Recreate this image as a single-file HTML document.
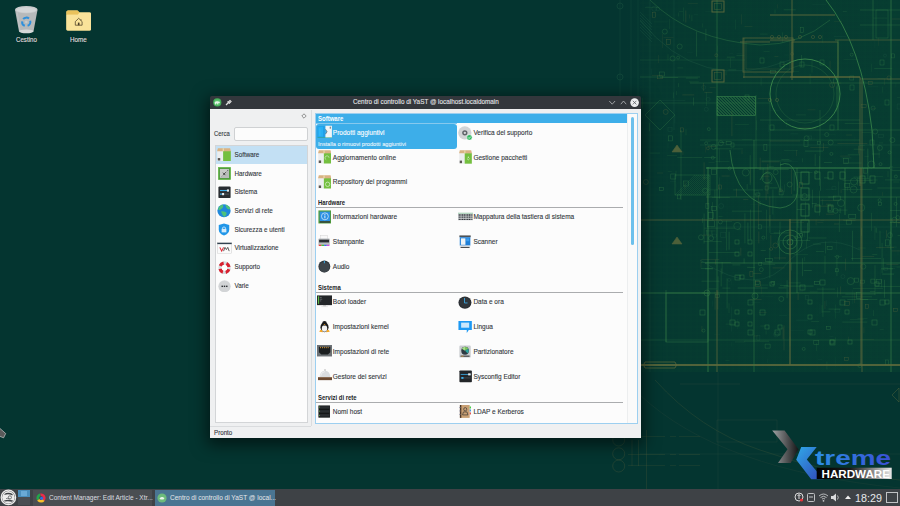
<!DOCTYPE html>
<html><head><meta charset="utf-8">
<style>
*{margin:0;padding:0;box-sizing:border-box}
html,body{width:900px;height:506px;overflow:hidden}
body{background:#043530;font-family:"Liberation Sans",sans-serif;position:relative}
.abs{position:absolute}
.t{position:absolute;white-space:nowrap;line-height:1;transform-origin:0 0;-webkit-text-stroke:0.1px currentColor}
</style></head><body>
<svg class="abs" style="left:0;top:0" width="900" height="506"><defs><linearGradient id="bpg" x1="0" x2="1" y1="0" y2="0"><stop offset="0" stop-color="#053730" stop-opacity="0"/><stop offset="0.1" stop-color="#053830" stop-opacity="1"/><stop offset="0.3" stop-color="#063a30"/><stop offset="1" stop-color="#073c31"/></linearGradient></defs><rect x="625" y="0" width="275" height="372" fill="url(#bpg)"/><line x1="643" y1="0" x2="643" y2="372" stroke="#1f5a44" stroke-width="0.35" opacity="0.3"/><line x1="649" y1="0" x2="649" y2="372" stroke="#1f5a44" stroke-width="0.35" opacity="0.3"/><line x1="655" y1="0" x2="655" y2="372" stroke="#1f5a44" stroke-width="0.35" opacity="0.3"/><line x1="661" y1="0" x2="661" y2="372" stroke="#1f5a44" stroke-width="0.35" opacity="0.3"/><line x1="667" y1="0" x2="667" y2="372" stroke="#1f5a44" stroke-width="0.35" opacity="0.3"/><line x1="673" y1="0" x2="673" y2="372" stroke="#1f5a44" stroke-width="0.35" opacity="0.3"/><line x1="679" y1="0" x2="679" y2="372" stroke="#1f5a44" stroke-width="0.35" opacity="0.3"/><line x1="685" y1="0" x2="685" y2="372" stroke="#1f5a44" stroke-width="0.35" opacity="0.3"/><line x1="691" y1="0" x2="691" y2="372" stroke="#1f5a44" stroke-width="0.35" opacity="0.3"/><line x1="697" y1="0" x2="697" y2="372" stroke="#1f5a44" stroke-width="0.35" opacity="0.3"/><line x1="703" y1="0" x2="703" y2="372" stroke="#1f5a44" stroke-width="0.35" opacity="0.3"/><line x1="709" y1="0" x2="709" y2="372" stroke="#1f5a44" stroke-width="0.35" opacity="0.3"/><line x1="715" y1="0" x2="715" y2="372" stroke="#1f5a44" stroke-width="0.35" opacity="0.3"/><line x1="721" y1="0" x2="721" y2="372" stroke="#1f5a44" stroke-width="0.35" opacity="0.3"/><line x1="727" y1="0" x2="727" y2="372" stroke="#1f5a44" stroke-width="0.35" opacity="0.3"/><line x1="733" y1="0" x2="733" y2="372" stroke="#1f5a44" stroke-width="0.35" opacity="0.3"/><line x1="739" y1="0" x2="739" y2="372" stroke="#1f5a44" stroke-width="0.35" opacity="0.3"/><line x1="745" y1="0" x2="745" y2="372" stroke="#1f5a44" stroke-width="0.35" opacity="0.3"/><line x1="751" y1="0" x2="751" y2="372" stroke="#1f5a44" stroke-width="0.35" opacity="0.3"/><line x1="757" y1="0" x2="757" y2="372" stroke="#1f5a44" stroke-width="0.35" opacity="0.3"/><line x1="763" y1="0" x2="763" y2="372" stroke="#1f5a44" stroke-width="0.35" opacity="0.3"/><line x1="769" y1="0" x2="769" y2="372" stroke="#1f5a44" stroke-width="0.35" opacity="0.3"/><line x1="775" y1="0" x2="775" y2="372" stroke="#1f5a44" stroke-width="0.35" opacity="0.3"/><line x1="781" y1="0" x2="781" y2="372" stroke="#1f5a44" stroke-width="0.35" opacity="0.3"/><line x1="787" y1="0" x2="787" y2="372" stroke="#1f5a44" stroke-width="0.35" opacity="0.3"/><line x1="793" y1="0" x2="793" y2="372" stroke="#1f5a44" stroke-width="0.35" opacity="0.3"/><line x1="799" y1="0" x2="799" y2="372" stroke="#1f5a44" stroke-width="0.35" opacity="0.3"/><line x1="805" y1="0" x2="805" y2="372" stroke="#1f5a44" stroke-width="0.35" opacity="0.3"/><line x1="811" y1="0" x2="811" y2="372" stroke="#1f5a44" stroke-width="0.35" opacity="0.3"/><line x1="817" y1="0" x2="817" y2="372" stroke="#1f5a44" stroke-width="0.35" opacity="0.3"/><line x1="823" y1="0" x2="823" y2="372" stroke="#1f5a44" stroke-width="0.35" opacity="0.3"/><line x1="829" y1="0" x2="829" y2="372" stroke="#1f5a44" stroke-width="0.35" opacity="0.3"/><line x1="835" y1="0" x2="835" y2="372" stroke="#1f5a44" stroke-width="0.35" opacity="0.3"/><line x1="841" y1="0" x2="841" y2="372" stroke="#1f5a44" stroke-width="0.35" opacity="0.3"/><line x1="847" y1="0" x2="847" y2="372" stroke="#1f5a44" stroke-width="0.35" opacity="0.3"/><line x1="853" y1="0" x2="853" y2="372" stroke="#1f5a44" stroke-width="0.35" opacity="0.3"/><line x1="859" y1="0" x2="859" y2="372" stroke="#1f5a44" stroke-width="0.35" opacity="0.3"/><line x1="865" y1="0" x2="865" y2="372" stroke="#1f5a44" stroke-width="0.35" opacity="0.3"/><line x1="871" y1="0" x2="871" y2="372" stroke="#1f5a44" stroke-width="0.35" opacity="0.3"/><line x1="877" y1="0" x2="877" y2="372" stroke="#1f5a44" stroke-width="0.35" opacity="0.3"/><line x1="883" y1="0" x2="883" y2="372" stroke="#1f5a44" stroke-width="0.35" opacity="0.3"/><line x1="889" y1="0" x2="889" y2="372" stroke="#1f5a44" stroke-width="0.35" opacity="0.3"/><line x1="895" y1="0" x2="895" y2="372" stroke="#1f5a44" stroke-width="0.35" opacity="0.3"/><line x1="640" y1="3" x2="900" y2="3" stroke="#1f5a44" stroke-width="0.35" opacity="0.25"/><line x1="640" y1="9" x2="900" y2="9" stroke="#1f5a44" stroke-width="0.35" opacity="0.25"/><line x1="640" y1="15" x2="900" y2="15" stroke="#1f5a44" stroke-width="0.35" opacity="0.25"/><line x1="640" y1="21" x2="900" y2="21" stroke="#1f5a44" stroke-width="0.35" opacity="0.25"/><line x1="640" y1="27" x2="900" y2="27" stroke="#1f5a44" stroke-width="0.35" opacity="0.25"/><line x1="640" y1="33" x2="900" y2="33" stroke="#1f5a44" stroke-width="0.35" opacity="0.25"/><line x1="640" y1="39" x2="900" y2="39" stroke="#1f5a44" stroke-width="0.35" opacity="0.25"/><line x1="640" y1="45" x2="900" y2="45" stroke="#1f5a44" stroke-width="0.35" opacity="0.25"/><line x1="640" y1="51" x2="900" y2="51" stroke="#1f5a44" stroke-width="0.35" opacity="0.25"/><line x1="640" y1="57" x2="900" y2="57" stroke="#1f5a44" stroke-width="0.35" opacity="0.25"/><line x1="640" y1="63" x2="900" y2="63" stroke="#1f5a44" stroke-width="0.35" opacity="0.25"/><line x1="640" y1="69" x2="900" y2="69" stroke="#1f5a44" stroke-width="0.35" opacity="0.25"/><line x1="640" y1="75" x2="900" y2="75" stroke="#1f5a44" stroke-width="0.35" opacity="0.25"/><line x1="640" y1="81" x2="900" y2="81" stroke="#1f5a44" stroke-width="0.35" opacity="0.25"/><line x1="640" y1="87" x2="900" y2="87" stroke="#1f5a44" stroke-width="0.35" opacity="0.25"/><line x1="640" y1="93" x2="900" y2="93" stroke="#1f5a44" stroke-width="0.35" opacity="0.25"/><line x1="640" y1="99" x2="900" y2="99" stroke="#1f5a44" stroke-width="0.35" opacity="0.25"/><line x1="640" y1="105" x2="900" y2="105" stroke="#1f5a44" stroke-width="0.35" opacity="0.25"/><line x1="640" y1="111" x2="900" y2="111" stroke="#1f5a44" stroke-width="0.35" opacity="0.25"/><line x1="640" y1="117" x2="900" y2="117" stroke="#1f5a44" stroke-width="0.35" opacity="0.25"/><line x1="640" y1="123" x2="900" y2="123" stroke="#1f5a44" stroke-width="0.35" opacity="0.25"/><line x1="640" y1="129" x2="900" y2="129" stroke="#1f5a44" stroke-width="0.35" opacity="0.25"/><line x1="640" y1="135" x2="900" y2="135" stroke="#1f5a44" stroke-width="0.35" opacity="0.25"/><line x1="640" y1="141" x2="900" y2="141" stroke="#1f5a44" stroke-width="0.35" opacity="0.25"/><line x1="640" y1="147" x2="900" y2="147" stroke="#1f5a44" stroke-width="0.35" opacity="0.25"/><line x1="640" y1="153" x2="900" y2="153" stroke="#1f5a44" stroke-width="0.35" opacity="0.25"/><line x1="640" y1="159" x2="900" y2="159" stroke="#1f5a44" stroke-width="0.35" opacity="0.25"/><line x1="640" y1="165" x2="900" y2="165" stroke="#1f5a44" stroke-width="0.35" opacity="0.25"/><line x1="640" y1="171" x2="900" y2="171" stroke="#1f5a44" stroke-width="0.35" opacity="0.25"/><line x1="640" y1="177" x2="900" y2="177" stroke="#1f5a44" stroke-width="0.35" opacity="0.25"/><line x1="640" y1="183" x2="900" y2="183" stroke="#1f5a44" stroke-width="0.35" opacity="0.25"/><line x1="640" y1="189" x2="900" y2="189" stroke="#1f5a44" stroke-width="0.35" opacity="0.25"/><line x1="640" y1="195" x2="900" y2="195" stroke="#1f5a44" stroke-width="0.35" opacity="0.25"/><line x1="640" y1="201" x2="900" y2="201" stroke="#1f5a44" stroke-width="0.35" opacity="0.25"/><line x1="640" y1="207" x2="900" y2="207" stroke="#1f5a44" stroke-width="0.35" opacity="0.25"/><line x1="640" y1="213" x2="900" y2="213" stroke="#1f5a44" stroke-width="0.35" opacity="0.25"/><line x1="640" y1="219" x2="900" y2="219" stroke="#1f5a44" stroke-width="0.35" opacity="0.25"/><line x1="640" y1="225" x2="900" y2="225" stroke="#1f5a44" stroke-width="0.35" opacity="0.25"/><line x1="640" y1="231" x2="900" y2="231" stroke="#1f5a44" stroke-width="0.35" opacity="0.25"/><line x1="640" y1="237" x2="900" y2="237" stroke="#1f5a44" stroke-width="0.35" opacity="0.25"/><line x1="640" y1="243" x2="900" y2="243" stroke="#1f5a44" stroke-width="0.35" opacity="0.25"/><line x1="640" y1="249" x2="900" y2="249" stroke="#1f5a44" stroke-width="0.35" opacity="0.25"/><line x1="640" y1="255" x2="900" y2="255" stroke="#1f5a44" stroke-width="0.35" opacity="0.25"/><line x1="640" y1="261" x2="900" y2="261" stroke="#1f5a44" stroke-width="0.35" opacity="0.25"/><line x1="640" y1="267" x2="900" y2="267" stroke="#1f5a44" stroke-width="0.35" opacity="0.25"/><line x1="640" y1="273" x2="900" y2="273" stroke="#1f5a44" stroke-width="0.35" opacity="0.25"/><line x1="640" y1="279" x2="900" y2="279" stroke="#1f5a44" stroke-width="0.35" opacity="0.25"/><line x1="640" y1="285" x2="900" y2="285" stroke="#1f5a44" stroke-width="0.35" opacity="0.25"/><line x1="640" y1="291" x2="900" y2="291" stroke="#1f5a44" stroke-width="0.35" opacity="0.25"/><line x1="640" y1="297" x2="900" y2="297" stroke="#1f5a44" stroke-width="0.35" opacity="0.25"/><line x1="640" y1="303" x2="900" y2="303" stroke="#1f5a44" stroke-width="0.35" opacity="0.25"/><line x1="640" y1="309" x2="900" y2="309" stroke="#1f5a44" stroke-width="0.35" opacity="0.25"/><line x1="640" y1="315" x2="900" y2="315" stroke="#1f5a44" stroke-width="0.35" opacity="0.25"/><line x1="640" y1="321" x2="900" y2="321" stroke="#1f5a44" stroke-width="0.35" opacity="0.25"/><line x1="640" y1="327" x2="900" y2="327" stroke="#1f5a44" stroke-width="0.35" opacity="0.25"/><line x1="640" y1="333" x2="900" y2="333" stroke="#1f5a44" stroke-width="0.35" opacity="0.25"/><line x1="640" y1="339" x2="900" y2="339" stroke="#1f5a44" stroke-width="0.35" opacity="0.25"/><line x1="640" y1="345" x2="900" y2="345" stroke="#1f5a44" stroke-width="0.35" opacity="0.25"/><line x1="640" y1="351" x2="900" y2="351" stroke="#1f5a44" stroke-width="0.35" opacity="0.25"/><line x1="640" y1="357" x2="900" y2="357" stroke="#1f5a44" stroke-width="0.35" opacity="0.25"/><line x1="640" y1="363" x2="900" y2="363" stroke="#1f5a44" stroke-width="0.35" opacity="0.25"/><line x1="640" y1="369" x2="900" y2="369" stroke="#1f5a44" stroke-width="0.35" opacity="0.25"/><line x1="726.9" y1="57.2" x2="734.9" y2="57.2" stroke="#3a8449" stroke-width="0.5" opacity="0.5"/><rect x="659.7" y="187.7" width="4" height="3" fill="none" stroke="#3a8449" stroke-width="0.5" opacity="0.55"/><rect x="705.9" y="203.7" width="3" height="5" fill="none" stroke="#3a8449" stroke-width="0.5" opacity="0.55"/><circle cx="803.7" cy="348.9" r="1.5" fill="none" stroke="#3a8449" stroke-width="0.5" opacity="0.55"/><line x1="892.0" y1="19.0" x2="917.0" y2="19.0" stroke="#5f6a3c" stroke-width="0.5" opacity="0.5"/><line x1="674.8" y1="114.9" x2="674.8" y2="122.9" stroke="#1f5a44" stroke-width="0.5" opacity="0.5"/><circle cx="806.6" cy="138.3" r="2.5" fill="none" stroke="#3a8449" stroke-width="0.5" opacity="0.55"/><line x1="660.1" y1="77.4" x2="678.1" y2="77.4" stroke="#3a8449" stroke-width="0.5" opacity="0.5"/><rect x="878.6" y="134.3" width="5" height="3" fill="none" stroke="#1f5a44" stroke-width="0.5" opacity="0.55"/><circle cx="665.7" cy="111.9" r="2.5" fill="none" stroke="#5f6a3c" stroke-width="0.5" opacity="0.55"/><rect x="758.6" y="224.9" width="3" height="4" fill="none" stroke="#3a8449" stroke-width="0.5" opacity="0.55"/><rect x="683.5" y="181.0" width="5" height="5" fill="none" stroke="#3a8449" stroke-width="0.5" opacity="0.55"/><rect x="844.6" y="301.5" width="5" height="4" fill="none" stroke="#5f6a3c" stroke-width="0.5" opacity="0.55"/><line x1="791.7" y1="169.0" x2="791.7" y2="194.0" stroke="#5f6a3c" stroke-width="0.5" opacity="0.5"/><circle cx="761.3" cy="269.6" r="2" fill="none" stroke="#3a8449" stroke-width="0.5" opacity="0.55"/><rect x="826.3" y="326.7" width="4" height="3" fill="none" stroke="#3a8449" stroke-width="0.5" opacity="0.55"/><rect x="799.6" y="182.7" width="3" height="5" fill="none" stroke="#5f6a3c" stroke-width="0.5" opacity="0.55"/><line x1="707.6" y1="145.1" x2="719.6" y2="145.1" stroke="#3a8449" stroke-width="0.5" opacity="0.5"/><line x1="784.0" y1="325.3" x2="784.0" y2="350.3" stroke="#5f6a3c" stroke-width="0.5" opacity="0.5"/><rect x="817.7" y="141.2" width="3" height="3" fill="none" stroke="#3a8449" stroke-width="0.5" opacity="0.55"/><circle cx="703.7" cy="87.4" r="2" fill="none" stroke="#1f5a44" stroke-width="0.5" opacity="0.55"/><circle cx="716.3" cy="55.3" r="1.5" fill="none" stroke="#5f6a3c" stroke-width="0.5" opacity="0.55"/><line x1="819.7" y1="190.7" x2="819.7" y2="215.7" stroke="#3a8449" stroke-width="0.5" opacity="0.5"/><line x1="842.3" y1="322.1" x2="867.3" y2="322.1" stroke="#3a8449" stroke-width="0.5" opacity="0.5"/><rect x="712.3" y="234.1" width="4" height="3" fill="none" stroke="#1f5a44" stroke-width="0.5" opacity="0.55"/><circle cx="720.3" cy="221.9" r="2" fill="none" stroke="#3a8449" stroke-width="0.5" opacity="0.55"/><rect x="800.3" y="27.7" width="3" height="5" fill="none" stroke="#3a8449" stroke-width="0.5" opacity="0.55"/><circle cx="708.8" cy="129.1" r="1.5" fill="none" stroke="#3a8449" stroke-width="0.5" opacity="0.55"/><circle cx="859.8" cy="365.5" r="2" fill="none" stroke="#3a8449" stroke-width="0.5" opacity="0.55"/><rect x="666.7" y="39.4" width="4" height="5" fill="none" stroke="#5f6a3c" stroke-width="0.5" opacity="0.55"/><line x1="685.8" y1="10.5" x2="685.8" y2="22.5" stroke="#5f6a3c" stroke-width="0.5" opacity="0.5"/><rect x="876.3" y="279.5" width="5" height="4" fill="none" stroke="#3a8449" stroke-width="0.5" opacity="0.55"/><circle cx="776.2" cy="334.4" r="2.5" fill="none" stroke="#1f5a44" stroke-width="0.5" opacity="0.55"/><line x1="782.0" y1="186.0" x2="782.0" y2="198.0" stroke="#1f5a44" stroke-width="0.5" opacity="0.5"/><circle cx="832.2" cy="85.0" r="2.5" fill="none" stroke="#5f6a3c" stroke-width="0.5" opacity="0.55"/><rect x="652.3" y="12.2" width="3" height="5" fill="none" stroke="#5f6a3c" stroke-width="0.5" opacity="0.55"/><line x1="798.1" y1="128.0" x2="816.1" y2="128.0" stroke="#5f6a3c" stroke-width="0.5" opacity="0.5"/><rect x="670.8" y="174.0" width="5" height="5" fill="none" stroke="#3a8449" stroke-width="0.5" opacity="0.55"/><line x1="857.6" y1="177.5" x2="857.6" y2="185.5" stroke="#3a8449" stroke-width="0.5" opacity="0.5"/><circle cx="842.9" cy="276.6" r="2" fill="none" stroke="#1f5a44" stroke-width="0.5" opacity="0.55"/><line x1="844.7" y1="123.7" x2="869.7" y2="123.7" stroke="#3a8449" stroke-width="0.5" opacity="0.5"/><rect x="884.5" y="267.3" width="3" height="3" fill="none" stroke="#1f5a44" stroke-width="0.5" opacity="0.55"/><line x1="794.5" y1="172.3" x2="812.5" y2="172.3" stroke="#3a8449" stroke-width="0.5" opacity="0.5"/><line x1="783.7" y1="9.8" x2="795.7" y2="9.8" stroke="#3a8449" stroke-width="0.5" opacity="0.5"/><rect x="865.6" y="304.4" width="3" height="4" fill="none" stroke="#5f6a3c" stroke-width="0.5" opacity="0.55"/><rect x="771.8" y="281.5" width="3" height="3" fill="none" stroke="#3a8449" stroke-width="0.5" opacity="0.55"/><circle cx="875.2" cy="131.5" r="2.5" fill="none" stroke="#3a8449" stroke-width="0.5" opacity="0.55"/><circle cx="678.1" cy="57.6" r="1.5" fill="none" stroke="#3a8449" stroke-width="0.5" opacity="0.55"/><rect x="799.0" y="286.0" width="4" height="5" fill="none" stroke="#1f5a44" stroke-width="0.5" opacity="0.55"/><rect x="828.5" y="205.7" width="3" height="5" fill="none" stroke="#3a8449" stroke-width="0.5" opacity="0.55"/><rect x="659.4" y="72.0" width="5" height="4" fill="none" stroke="#3a8449" stroke-width="0.5" opacity="0.55"/><line x1="787.1" y1="280.2" x2="787.1" y2="298.2" stroke="#3a8449" stroke-width="0.5" opacity="0.5"/><line x1="772.9" y1="189.5" x2="772.9" y2="214.5" stroke="#3a8449" stroke-width="0.5" opacity="0.5"/><line x1="707.7" y1="193.5" x2="707.7" y2="205.5" stroke="#5f6a3c" stroke-width="0.5" opacity="0.5"/><circle cx="679.7" cy="46.5" r="2.5" fill="none" stroke="#3a8449" stroke-width="0.5" opacity="0.55"/><line x1="705.9" y1="28.8" x2="705.9" y2="40.8" stroke="#3a8449" stroke-width="0.5" opacity="0.5"/><rect x="807.8" y="136.0" width="4" height="3" fill="none" stroke="#1f5a44" stroke-width="0.5" opacity="0.55"/><line x1="833.9" y1="36.4" x2="845.9" y2="36.4" stroke="#1f5a44" stroke-width="0.5" opacity="0.5"/><rect x="754.2" y="190.7" width="4" height="4" fill="none" stroke="#1f5a44" stroke-width="0.5" opacity="0.55"/><rect x="668.3" y="135.9" width="4" height="5" fill="none" stroke="#3a8449" stroke-width="0.5" opacity="0.55"/><line x1="649.6" y1="123.3" x2="649.6" y2="131.3" stroke="#3a8449" stroke-width="0.5" opacity="0.5"/><rect x="844.5" y="357.6" width="4" height="3" fill="none" stroke="#5f6a3c" stroke-width="0.5" opacity="0.55"/><line x1="874.2" y1="68.4" x2="892.2" y2="68.4" stroke="#3a8449" stroke-width="0.5" opacity="0.5"/><circle cx="780.8" cy="190.4" r="1.5" fill="none" stroke="#5f6a3c" stroke-width="0.5" opacity="0.55"/><rect x="715.6" y="294.6" width="4" height="3" fill="none" stroke="#3a8449" stroke-width="0.5" opacity="0.55"/><rect x="805.5" y="295.4" width="3" height="4" fill="none" stroke="#1f5a44" stroke-width="0.5" opacity="0.55"/><rect x="863.3" y="168.1" width="4" height="5" fill="none" stroke="#3a8449" stroke-width="0.5" opacity="0.55"/><rect x="677.7" y="194.9" width="3" height="4" fill="none" stroke="#3a8449" stroke-width="0.5" opacity="0.55"/><rect x="657.7" y="75.8" width="5" height="3" fill="none" stroke="#5f6a3c" stroke-width="0.5" opacity="0.55"/><rect x="718.4" y="185.0" width="3" height="4" fill="none" stroke="#5f6a3c" stroke-width="0.5" opacity="0.55"/><circle cx="654.3" cy="8.7" r="2.5" fill="none" stroke="#1f5a44" stroke-width="0.5" opacity="0.55"/><rect x="765.1" y="344.1" width="5" height="4" fill="none" stroke="#3a8449" stroke-width="0.5" opacity="0.55"/><line x1="783.1" y1="327.3" x2="783.1" y2="339.3" stroke="#5f6a3c" stroke-width="0.5" opacity="0.5"/><line x1="731.7" y1="306.6" x2="731.7" y2="331.6" stroke="#1f5a44" stroke-width="0.5" opacity="0.5"/><rect x="893.4" y="308.3" width="4" height="3" fill="none" stroke="#5f6a3c" stroke-width="0.5" opacity="0.55"/><circle cx="775.4" cy="245.5" r="2.5" fill="none" stroke="#5f6a3c" stroke-width="0.5" opacity="0.55"/><circle cx="706.3" cy="109.3" r="2" fill="none" stroke="#1f5a44" stroke-width="0.5" opacity="0.55"/><line x1="757.8" y1="98.3" x2="769.8" y2="98.3" stroke="#5f6a3c" stroke-width="0.5" opacity="0.5"/><rect x="868.2" y="81.7" width="4" height="3" fill="none" stroke="#5f6a3c" stroke-width="0.5" opacity="0.55"/><rect x="765.1" y="186.0" width="3" height="4" fill="none" stroke="#3a8449" stroke-width="0.5" opacity="0.55"/><circle cx="851.7" cy="54.7" r="1.5" fill="none" stroke="#3a8449" stroke-width="0.5" opacity="0.55"/><rect x="720.8" y="232.5" width="5" height="5" fill="none" stroke="#1f5a44" stroke-width="0.5" opacity="0.55"/><line x1="843.4" y1="220.3" x2="855.4" y2="220.3" stroke="#3a8449" stroke-width="0.5" opacity="0.5"/><line x1="801.5" y1="55.0" x2="801.5" y2="67.0" stroke="#3a8449" stroke-width="0.5" opacity="0.5"/><line x1="835.5" y1="210.1" x2="847.5" y2="210.1" stroke="#3a8449" stroke-width="0.5" opacity="0.5"/><circle cx="890.0" cy="235.2" r="2.5" fill="none" stroke="#3a8449" stroke-width="0.5" opacity="0.55"/><circle cx="657.8" cy="8.9" r="2" fill="none" stroke="#1f5a44" stroke-width="0.5" opacity="0.55"/><rect x="711.7" y="169.2" width="5" height="5" fill="none" stroke="#3a8449" stroke-width="0.5" opacity="0.55"/><rect x="749.9" y="271.7" width="3" height="5" fill="none" stroke="#5f6a3c" stroke-width="0.5" opacity="0.55"/><line x1="836.4" y1="86.4" x2="836.4" y2="111.4" stroke="#3a8449" stroke-width="0.5" opacity="0.5"/><rect x="756.9" y="335.2" width="3" height="5" fill="none" stroke="#1f5a44" stroke-width="0.5" opacity="0.55"/><line x1="682.3" y1="94.9" x2="694.3" y2="94.9" stroke="#5f6a3c" stroke-width="0.5" opacity="0.5"/><line x1="660.3" y1="100.4" x2="685.3" y2="100.4" stroke="#1f5a44" stroke-width="0.5" opacity="0.5"/><circle cx="775.7" cy="172.1" r="2.5" fill="none" stroke="#3a8449" stroke-width="0.5" opacity="0.55"/><rect x="885.4" y="360.0" width="3" height="5" fill="none" stroke="#3a8449" stroke-width="0.5" opacity="0.55"/><rect x="889.9" y="166.5" width="3" height="3" fill="none" stroke="#1f5a44" stroke-width="0.5" opacity="0.55"/><circle cx="792.1" cy="53.9" r="1.5" fill="none" stroke="#5f6a3c" stroke-width="0.5" opacity="0.55"/><rect x="797.7" y="233.2" width="5" height="4" fill="none" stroke="#3a8449" stroke-width="0.5" opacity="0.55"/><circle cx="703.5" cy="330.6" r="1.5" fill="none" stroke="#3a8449" stroke-width="0.5" opacity="0.55"/><circle cx="645.9" cy="182.0" r="2.5" fill="none" stroke="#5f6a3c" stroke-width="0.5" opacity="0.55"/><rect x="680.6" y="127.9" width="3" height="4" fill="none" stroke="#5f6a3c" stroke-width="0.5" opacity="0.55"/><rect x="834.9" y="309.1" width="5" height="3" fill="none" stroke="#1f5a44" stroke-width="0.5" opacity="0.55"/><circle cx="873.1" cy="108.1" r="2" fill="none" stroke="#3a8449" stroke-width="0.5" opacity="0.55"/><circle cx="897.7" cy="217.6" r="2" fill="none" stroke="#3a8449" stroke-width="0.5" opacity="0.55"/><rect x="861.1" y="104.7" width="5" height="3" fill="none" stroke="#5f6a3c" stroke-width="0.5" opacity="0.55"/><circle cx="708.1" cy="99.3" r="2" fill="none" stroke="#1f5a44" stroke-width="0.5" opacity="0.55"/><rect x="843.6" y="158.6" width="5" height="5" fill="none" stroke="#3a8449" stroke-width="0.5" opacity="0.55"/><line x1="696.5" y1="31.5" x2="696.5" y2="56.5" stroke="#3a8449" stroke-width="0.5" opacity="0.5"/><line x1="796.1" y1="320.2" x2="808.1" y2="320.2" stroke="#1f5a44" stroke-width="0.5" opacity="0.5"/><line x1="731.9" y1="111.0" x2="731.9" y2="136.0" stroke="#5f6a3c" stroke-width="0.5" opacity="0.5"/><circle cx="721.1" cy="206.0" r="2.5" fill="none" stroke="#1f5a44" stroke-width="0.5" opacity="0.55"/><line x1="685.9" y1="78.1" x2="697.9" y2="78.1" stroke="#3a8449" stroke-width="0.5" opacity="0.5"/><circle cx="729.2" cy="279.9" r="1.5" fill="none" stroke="#1f5a44" stroke-width="0.5" opacity="0.55"/><rect x="668.0" y="127.2" width="4" height="4" fill="none" stroke="#1f5a44" stroke-width="0.5" opacity="0.55"/><rect x="849.8" y="76.0" width="4" height="4" fill="none" stroke="#3a8449" stroke-width="0.5" opacity="0.55"/><rect x="833.7" y="78.9" width="4" height="4" fill="none" stroke="#3a8449" stroke-width="0.5" opacity="0.55"/><line x1="790.3" y1="133.8" x2="798.3" y2="133.8" stroke="#1f5a44" stroke-width="0.5" opacity="0.5"/><circle cx="707.9" cy="148.3" r="1.5" fill="none" stroke="#5f6a3c" stroke-width="0.5" opacity="0.55"/><line x1="677.2" y1="157.6" x2="702.2" y2="157.6" stroke="#3a8449" stroke-width="0.5" opacity="0.5"/><line x1="744.1" y1="341.2" x2="769.1" y2="341.2" stroke="#3a8449" stroke-width="0.5" opacity="0.5"/><circle cx="672.6" cy="58.5" r="2.5" fill="none" stroke="#3a8449" stroke-width="0.5" opacity="0.55"/><line x1="822.4" y1="311.8" x2="830.4" y2="311.8" stroke="#3a8449" stroke-width="0.5" opacity="0.5"/><line x1="707.4" y1="210.4" x2="707.4" y2="228.4" stroke="#1f5a44" stroke-width="0.5" opacity="0.5"/><rect x="755.7" y="281.6" width="5" height="5" fill="none" stroke="#5f6a3c" stroke-width="0.5" opacity="0.55"/><line x1="693.5" y1="97.5" x2="693.5" y2="105.5" stroke="#3a8449" stroke-width="0.5" opacity="0.5"/><rect x="897.1" y="104.0" width="4" height="5" fill="none" stroke="#1f5a44" stroke-width="0.5" opacity="0.55"/><line x1="704.4" y1="92.4" x2="712.4" y2="92.4" stroke="#5f6a3c" stroke-width="0.5" opacity="0.5"/><circle cx="771.1" cy="248.9" r="1.5" fill="none" stroke="#5f6a3c" stroke-width="0.5" opacity="0.55"/><rect x="813.8" y="340.6" width="5" height="4" fill="none" stroke="#3a8449" stroke-width="0.5" opacity="0.55"/><circle cx="826.7" cy="134.6" r="2" fill="none" stroke="#3a8449" stroke-width="0.5" opacity="0.55"/><rect x="832.0" y="186.8" width="4" height="3" fill="none" stroke="#1f5a44" stroke-width="0.5" opacity="0.55"/><line x1="703.4" y1="83.0" x2="703.4" y2="91.0" stroke="#5f6a3c" stroke-width="0.5" opacity="0.5"/><rect x="770.4" y="70.6" width="5" height="3" fill="none" stroke="#3a8449" stroke-width="0.5" opacity="0.55"/><circle cx="885.0" cy="55.6" r="1.5" fill="none" stroke="#1f5a44" stroke-width="0.5" opacity="0.55"/><rect x="891.5" y="53.9" width="3" height="4" fill="none" stroke="#3a8449" stroke-width="0.5" opacity="0.55"/><rect x="758.8" y="262.6" width="3" height="3" fill="none" stroke="#3a8449" stroke-width="0.5" opacity="0.55"/><line x1="728.3" y1="69.9" x2="736.3" y2="69.9" stroke="#3a8449" stroke-width="0.5" opacity="0.5"/><line x1="828.5" y1="309.1" x2="840.5" y2="309.1" stroke="#3a8449" stroke-width="0.5" opacity="0.5"/><circle cx="664.8" cy="31.6" r="2.5" fill="none" stroke="#3a8449" stroke-width="0.5" opacity="0.55"/><circle cx="889.0" cy="77.9" r="2" fill="none" stroke="#5f6a3c" stroke-width="0.5" opacity="0.55"/><rect x="743" y="38" width="50" height="34" fill="none" stroke="#5f6a3c" stroke-width="0.9" opacity="0.8"/><rect x="746" y="41" width="44" height="28" fill="none" stroke="#5f6a3c" stroke-width="0.4" opacity="0.6"/><rect x="792" y="42" width="46" height="35" fill="none" stroke="#5f6a3c" stroke-width="0.9" opacity="0.8"/><line x1="743" y1="77" x2="860" y2="77" stroke="#5f6a3c" stroke-width="1.0" opacity="0.85"/><line x1="860" y1="79" x2="900" y2="79" stroke="#5f6a3c" stroke-width="0.9" opacity="0.8"/><line x1="860" y1="77" x2="860" y2="186" stroke="#5f6a3c" stroke-width="0.9" opacity="0.8"/><circle cx="772" cy="37" r="1.6" fill="none" stroke="#5f6a3c" stroke-width="0.6" opacity="0.7"/><circle cx="779" cy="37" r="1.6" fill="none" stroke="#5f6a3c" stroke-width="0.6" opacity="0.7"/><circle cx="786" cy="37" r="1.6" fill="none" stroke="#5f6a3c" stroke-width="0.6" opacity="0.7"/><circle cx="800" cy="37" r="1.6" fill="none" stroke="#5f6a3c" stroke-width="0.6" opacity="0.7"/><circle cx="813" cy="37" r="1.6" fill="none" stroke="#5f6a3c" stroke-width="0.6" opacity="0.7"/><circle cx="820" cy="37" r="1.6" fill="none" stroke="#5f6a3c" stroke-width="0.6" opacity="0.7"/><circle cx="770" cy="100" r="1.6" fill="none" stroke="#5f6a3c" stroke-width="0.6" opacity="0.7"/><circle cx="777" cy="100" r="1.6" fill="none" stroke="#5f6a3c" stroke-width="0.6" opacity="0.7"/><rect x="760" y="58" width="4" height="5" fill="none" stroke="#3a8449" stroke-width="0.5" opacity="0.6"/><rect x="780" y="62" width="4" height="5" fill="none" stroke="#3a8449" stroke-width="0.5" opacity="0.6"/><rect x="800" y="62" width="4" height="5" fill="none" stroke="#3a8449" stroke-width="0.5" opacity="0.6"/><rect x="820" y="60" width="4" height="5" fill="none" stroke="#3a8449" stroke-width="0.5" opacity="0.6"/><rect x="745" y="95" width="4" height="5" fill="none" stroke="#3a8449" stroke-width="0.5" opacity="0.6"/><rect x="770" y="125" width="4" height="5" fill="none" stroke="#3a8449" stroke-width="0.5" opacity="0.6"/><rect x="830" y="125" width="4" height="5" fill="none" stroke="#3a8449" stroke-width="0.5" opacity="0.6"/><rect x="850" y="85" width="4" height="5" fill="none" stroke="#3a8449" stroke-width="0.5" opacity="0.6"/><rect x="880" y="60" width="4" height="5" fill="none" stroke="#3a8449" stroke-width="0.5" opacity="0.6"/><rect x="885" y="100" width="4" height="5" fill="none" stroke="#3a8449" stroke-width="0.5" opacity="0.6"/><rect x="870" y="140" width="4" height="5" fill="none" stroke="#3a8449" stroke-width="0.5" opacity="0.6"/><line x1="640" y1="60" x2="745" y2="60" stroke="#3a8449" stroke-width="0.4" opacity="0.5"/><line x1="760" y1="120" x2="860" y2="120" stroke="#3a8449" stroke-width="0.5" opacity="0.6"/><line x1="700" y1="140" x2="860" y2="140" stroke="#3a8449" stroke-width="0.5" opacity="0.55"/><line x1="756" y1="95" x2="756" y2="168" stroke="#3a8449" stroke-width="0.5" opacity="0.6"/><line x1="770" y1="100" x2="770" y2="168" stroke="#3a8449" stroke-width="0.5" opacity="0.55"/><line x1="820" y1="110" x2="820" y2="168" stroke="#3a8449" stroke-width="0.5" opacity="0.55"/><line x1="756.3" y1="120.3" x2="756.3" y2="130.3" stroke="#3a8449" stroke-width="0.4" opacity="0.45"/><line x1="705.5" y1="230.9" x2="715.5" y2="230.9" stroke="#3a8449" stroke-width="0.4" opacity="0.45"/><line x1="760.8" y1="296.0" x2="764.8" y2="296.0" stroke="#1f5a44" stroke-width="0.4" opacity="0.45"/><line x1="734.9" y1="124.6" x2="748.9" y2="124.6" stroke="#3a8449" stroke-width="0.4" opacity="0.45"/><line x1="825.5" y1="117.8" x2="833.5" y2="117.8" stroke="#1f5a44" stroke-width="0.4" opacity="0.45"/><line x1="835.4" y1="337.4" x2="835.4" y2="341.4" stroke="#3a8449" stroke-width="0.4" opacity="0.45"/><line x1="761.2" y1="286.1" x2="761.2" y2="294.1" stroke="#5f6a3c" stroke-width="0.4" opacity="0.45"/><line x1="676.0" y1="183.7" x2="676.0" y2="187.7" stroke="#1f5a44" stroke-width="0.4" opacity="0.45"/><line x1="839.8" y1="224.3" x2="847.8" y2="224.3" stroke="#1f5a44" stroke-width="0.4" opacity="0.45"/><line x1="842.7" y1="220.0" x2="856.7" y2="220.0" stroke="#3a8449" stroke-width="0.4" opacity="0.45"/><line x1="682.9" y1="151.2" x2="682.9" y2="155.2" stroke="#5f6a3c" stroke-width="0.4" opacity="0.45"/><line x1="725.4" y1="360.8" x2="729.4" y2="360.8" stroke="#3a8449" stroke-width="0.4" opacity="0.45"/><line x1="663.5" y1="37.3" x2="673.5" y2="37.3" stroke="#5f6a3c" stroke-width="0.4" opacity="0.45"/><line x1="676.0" y1="170.7" x2="676.0" y2="176.7" stroke="#3a8449" stroke-width="0.4" opacity="0.45"/><line x1="717.2" y1="104.3" x2="725.2" y2="104.3" stroke="#1f5a44" stroke-width="0.4" opacity="0.45"/><line x1="708.6" y1="162.8" x2="714.6" y2="162.8" stroke="#3a8449" stroke-width="0.4" opacity="0.45"/><line x1="714.0" y1="334.2" x2="720.0" y2="334.2" stroke="#1f5a44" stroke-width="0.4" opacity="0.45"/><line x1="706.4" y1="92.0" x2="706.4" y2="106.0" stroke="#3a8449" stroke-width="0.4" opacity="0.45"/><line x1="667.7" y1="171.8" x2="671.7" y2="171.8" stroke="#3a8449" stroke-width="0.4" opacity="0.45"/><line x1="868.0" y1="86.6" x2="878.0" y2="86.6" stroke="#1f5a44" stroke-width="0.4" opacity="0.45"/><line x1="717.2" y1="45.6" x2="717.2" y2="51.6" stroke="#3a8449" stroke-width="0.4" opacity="0.45"/><line x1="737.3" y1="319.0" x2="737.3" y2="329.0" stroke="#1f5a44" stroke-width="0.4" opacity="0.45"/><line x1="812.2" y1="4.3" x2="826.2" y2="4.3" stroke="#1f5a44" stroke-width="0.4" opacity="0.45"/><line x1="736.4" y1="53.7" x2="742.4" y2="53.7" stroke="#1f5a44" stroke-width="0.4" opacity="0.45"/><line x1="829.5" y1="336.5" x2="833.5" y2="336.5" stroke="#1f5a44" stroke-width="0.4" opacity="0.45"/><line x1="737.2" y1="229.3" x2="741.2" y2="229.3" stroke="#3a8449" stroke-width="0.4" opacity="0.45"/><line x1="768.9" y1="179.0" x2="768.9" y2="189.0" stroke="#3a8449" stroke-width="0.4" opacity="0.45"/><line x1="812.0" y1="58.6" x2="812.0" y2="72.6" stroke="#3a8449" stroke-width="0.4" opacity="0.45"/><line x1="743.8" y1="101.2" x2="751.8" y2="101.2" stroke="#1f5a44" stroke-width="0.4" opacity="0.45"/><line x1="868.2" y1="153.6" x2="868.2" y2="157.6" stroke="#1f5a44" stroke-width="0.4" opacity="0.45"/><line x1="742.0" y1="150.2" x2="742.0" y2="154.2" stroke="#5f6a3c" stroke-width="0.4" opacity="0.45"/><line x1="750.5" y1="302.3" x2="760.5" y2="302.3" stroke="#1f5a44" stroke-width="0.4" opacity="0.45"/><line x1="683.6" y1="7.4" x2="683.6" y2="21.4" stroke="#3a8449" stroke-width="0.4" opacity="0.45"/><line x1="874.9" y1="34.6" x2="874.9" y2="48.6" stroke="#1f5a44" stroke-width="0.4" opacity="0.45"/><line x1="686.0" y1="129.3" x2="686.0" y2="135.3" stroke="#3a8449" stroke-width="0.4" opacity="0.45"/><line x1="669.9" y1="181.5" x2="675.9" y2="181.5" stroke="#1f5a44" stroke-width="0.4" opacity="0.45"/><line x1="883.4" y1="359.1" x2="893.4" y2="359.1" stroke="#1f5a44" stroke-width="0.4" opacity="0.45"/><line x1="879.1" y1="144.0" x2="879.1" y2="158.0" stroke="#3a8449" stroke-width="0.4" opacity="0.45"/><line x1="861.3" y1="229.3" x2="861.3" y2="243.3" stroke="#3a8449" stroke-width="0.4" opacity="0.45"/><line x1="688.8" y1="81.8" x2="698.8" y2="81.8" stroke="#3a8449" stroke-width="0.4" opacity="0.45"/><line x1="673.5" y1="92.4" x2="673.5" y2="98.4" stroke="#3a8449" stroke-width="0.4" opacity="0.45"/><line x1="857.7" y1="248.0" x2="865.7" y2="248.0" stroke="#3a8449" stroke-width="0.4" opacity="0.45"/><line x1="758.7" y1="312.7" x2="766.7" y2="312.7" stroke="#5f6a3c" stroke-width="0.4" opacity="0.45"/><line x1="705.8" y1="144.5" x2="705.8" y2="152.5" stroke="#5f6a3c" stroke-width="0.4" opacity="0.45"/><line x1="687.8" y1="3.3" x2="697.8" y2="3.3" stroke="#5f6a3c" stroke-width="0.4" opacity="0.45"/><line x1="837.5" y1="287.5" x2="837.5" y2="297.5" stroke="#3a8449" stroke-width="0.4" opacity="0.45"/><line x1="744.5" y1="26.6" x2="752.5" y2="26.6" stroke="#5f6a3c" stroke-width="0.4" opacity="0.45"/><line x1="847.4" y1="186.6" x2="847.4" y2="190.6" stroke="#3a8449" stroke-width="0.4" opacity="0.45"/><line x1="841.1" y1="189.2" x2="841.1" y2="193.2" stroke="#5f6a3c" stroke-width="0.4" opacity="0.45"/><line x1="842.8" y1="11.5" x2="846.8" y2="11.5" stroke="#3a8449" stroke-width="0.4" opacity="0.45"/><line x1="893.3" y1="182.0" x2="899.3" y2="182.0" stroke="#3a8449" stroke-width="0.4" opacity="0.45"/><line x1="731.8" y1="278.8" x2="731.8" y2="284.8" stroke="#1f5a44" stroke-width="0.4" opacity="0.45"/><line x1="712.4" y1="300.5" x2="712.4" y2="306.5" stroke="#1f5a44" stroke-width="0.4" opacity="0.45"/><line x1="877.5" y1="78.2" x2="885.5" y2="78.2" stroke="#3a8449" stroke-width="0.4" opacity="0.45"/><line x1="651.4" y1="68.6" x2="651.4" y2="74.6" stroke="#1f5a44" stroke-width="0.4" opacity="0.45"/><line x1="871.2" y1="63.8" x2="871.2" y2="71.8" stroke="#3a8449" stroke-width="0.4" opacity="0.45"/><line x1="889.3" y1="167.8" x2="903.3" y2="167.8" stroke="#3a8449" stroke-width="0.4" opacity="0.45"/><line x1="779.1" y1="315.5" x2="787.1" y2="315.5" stroke="#1f5a44" stroke-width="0.4" opacity="0.45"/><line x1="736.4" y1="55.5" x2="744.4" y2="55.5" stroke="#3a8449" stroke-width="0.4" opacity="0.45"/><line x1="706.9" y1="236.0" x2="706.9" y2="250.0" stroke="#1f5a44" stroke-width="0.4" opacity="0.45"/><line x1="833.3" y1="83.1" x2="841.3" y2="83.1" stroke="#5f6a3c" stroke-width="0.4" opacity="0.45"/><line x1="735.2" y1="19.5" x2="735.2" y2="29.5" stroke="#3a8449" stroke-width="0.4" opacity="0.45"/><line x1="653.7" y1="21.9" x2="667.7" y2="21.9" stroke="#1f5a44" stroke-width="0.4" opacity="0.45"/><line x1="775.9" y1="197.5" x2="775.9" y2="207.5" stroke="#1f5a44" stroke-width="0.4" opacity="0.45"/><line x1="763.6" y1="51.3" x2="769.6" y2="51.3" stroke="#3a8449" stroke-width="0.4" opacity="0.45"/><line x1="658.3" y1="55.0" x2="658.3" y2="63.0" stroke="#5f6a3c" stroke-width="0.4" opacity="0.45"/><line x1="889.6" y1="22.5" x2="889.6" y2="36.5" stroke="#1f5a44" stroke-width="0.4" opacity="0.45"/><line x1="790.1" y1="222.3" x2="804.1" y2="222.3" stroke="#5f6a3c" stroke-width="0.4" opacity="0.45"/><line x1="873.3" y1="18.1" x2="887.3" y2="18.1" stroke="#3a8449" stroke-width="0.4" opacity="0.45"/><line x1="702.8" y1="23.4" x2="702.8" y2="27.4" stroke="#3a8449" stroke-width="0.4" opacity="0.45"/><line x1="810.1" y1="74.2" x2="810.1" y2="84.2" stroke="#3a8449" stroke-width="0.4" opacity="0.45"/><line x1="806.5" y1="239.0" x2="806.5" y2="249.0" stroke="#3a8449" stroke-width="0.4" opacity="0.45"/><line x1="896.5" y1="267.1" x2="906.5" y2="267.1" stroke="#3a8449" stroke-width="0.4" opacity="0.45"/><line x1="753.8" y1="335.9" x2="757.8" y2="335.9" stroke="#5f6a3c" stroke-width="0.4" opacity="0.45"/><line x1="897.1" y1="97.7" x2="901.1" y2="97.7" stroke="#3a8449" stroke-width="0.4" opacity="0.45"/><line x1="833.9" y1="256.4" x2="841.9" y2="256.4" stroke="#3a8449" stroke-width="0.4" opacity="0.45"/><line x1="783.8" y1="161.6" x2="797.8" y2="161.6" stroke="#1f5a44" stroke-width="0.4" opacity="0.45"/><line x1="879.7" y1="329.3" x2="883.7" y2="329.3" stroke="#3a8449" stroke-width="0.4" opacity="0.45"/><line x1="873.6" y1="310.1" x2="873.6" y2="316.1" stroke="#3a8449" stroke-width="0.4" opacity="0.45"/><line x1="725.7" y1="324.1" x2="733.7" y2="324.1" stroke="#3a8449" stroke-width="0.4" opacity="0.45"/><line x1="860.1" y1="339.3" x2="874.1" y2="339.3" stroke="#5f6a3c" stroke-width="0.4" opacity="0.45"/><line x1="777.8" y1="4.3" x2="777.8" y2="8.3" stroke="#5f6a3c" stroke-width="0.4" opacity="0.45"/><line x1="701.9" y1="325.8" x2="701.9" y2="331.8" stroke="#5f6a3c" stroke-width="0.4" opacity="0.45"/><line x1="679.0" y1="11.8" x2="683.0" y2="11.8" stroke="#3a8449" stroke-width="0.4" opacity="0.45"/><line x1="678.3" y1="12.5" x2="678.3" y2="16.5" stroke="#3a8449" stroke-width="0.4" opacity="0.45"/><line x1="804.3" y1="257.1" x2="804.3" y2="261.1" stroke="#3a8449" stroke-width="0.4" opacity="0.45"/><line x1="837.0" y1="74.9" x2="837.0" y2="88.9" stroke="#3a8449" stroke-width="0.4" opacity="0.45"/><line x1="835.5" y1="262.3" x2="845.5" y2="262.3" stroke="#3a8449" stroke-width="0.4" opacity="0.45"/><line x1="694.0" y1="14.4" x2="698.0" y2="14.4" stroke="#1f5a44" stroke-width="0.4" opacity="0.45"/><line x1="807.5" y1="109.8" x2="815.5" y2="109.8" stroke="#5f6a3c" stroke-width="0.4" opacity="0.45"/><line x1="731.8" y1="342.4" x2="731.8" y2="346.4" stroke="#1f5a44" stroke-width="0.4" opacity="0.45"/><line x1="838.9" y1="222.3" x2="838.9" y2="232.3" stroke="#1f5a44" stroke-width="0.4" opacity="0.45"/><line x1="649.9" y1="153.1" x2="659.9" y2="153.1" stroke="#3a8449" stroke-width="0.4" opacity="0.45"/><line x1="822.4" y1="198.9" x2="822.4" y2="204.9" stroke="#3a8449" stroke-width="0.4" opacity="0.45"/><line x1="715.5" y1="161.6" x2="729.5" y2="161.6" stroke="#3a8449" stroke-width="0.4" opacity="0.45"/><line x1="834.1" y1="21.8" x2="842.1" y2="21.8" stroke="#5f6a3c" stroke-width="0.4" opacity="0.45"/><line x1="820.0" y1="304.1" x2="820.0" y2="314.1" stroke="#1f5a44" stroke-width="0.4" opacity="0.45"/><line x1="773.9" y1="213.6" x2="773.9" y2="219.6" stroke="#1f5a44" stroke-width="0.4" opacity="0.45"/><line x1="882.2" y1="86.7" x2="882.2" y2="92.7" stroke="#3a8449" stroke-width="0.4" opacity="0.45"/><line x1="838.3" y1="181.4" x2="838.3" y2="195.4" stroke="#3a8449" stroke-width="0.4" opacity="0.45"/><line x1="733.0" y1="148.9" x2="743.0" y2="148.9" stroke="#3a8449" stroke-width="0.4" opacity="0.45"/><line x1="807.3" y1="138.1" x2="815.3" y2="138.1" stroke="#1f5a44" stroke-width="0.4" opacity="0.45"/><line x1="781.5" y1="64.6" x2="787.5" y2="64.6" stroke="#5f6a3c" stroke-width="0.4" opacity="0.45"/><line x1="794.1" y1="254.3" x2="808.1" y2="254.3" stroke="#3a8449" stroke-width="0.4" opacity="0.45"/><line x1="725.6" y1="58.8" x2="735.6" y2="58.8" stroke="#1f5a44" stroke-width="0.4" opacity="0.45"/><line x1="754.3" y1="285.1" x2="768.3" y2="285.1" stroke="#3a8449" stroke-width="0.4" opacity="0.45"/><line x1="760.3" y1="326.0" x2="766.3" y2="326.0" stroke="#3a8449" stroke-width="0.4" opacity="0.45"/><line x1="835.2" y1="304.5" x2="835.2" y2="318.5" stroke="#3a8449" stroke-width="0.4" opacity="0.45"/><line x1="891.5" y1="266.7" x2="905.5" y2="266.7" stroke="#1f5a44" stroke-width="0.4" opacity="0.45"/><line x1="726.0" y1="71.3" x2="726.0" y2="75.3" stroke="#3a8449" stroke-width="0.4" opacity="0.45"/><line x1="668.0" y1="142.6" x2="668.0" y2="148.6" stroke="#1f5a44" stroke-width="0.4" opacity="0.45"/><line x1="753.3" y1="73.8" x2="757.3" y2="73.8" stroke="#1f5a44" stroke-width="0.4" opacity="0.45"/><line x1="741.4" y1="14.4" x2="741.4" y2="24.4" stroke="#5f6a3c" stroke-width="0.4" opacity="0.45"/><line x1="770.1" y1="233.5" x2="780.1" y2="233.5" stroke="#3a8449" stroke-width="0.4" opacity="0.45"/><line x1="796.5" y1="150.1" x2="796.5" y2="156.1" stroke="#5f6a3c" stroke-width="0.4" opacity="0.45"/><line x1="792.4" y1="238.9" x2="792.4" y2="244.9" stroke="#3a8449" stroke-width="0.4" opacity="0.45"/><line x1="806.2" y1="168.1" x2="806.2" y2="176.1" stroke="#1f5a44" stroke-width="0.4" opacity="0.45"/><line x1="667.1" y1="155.6" x2="677.1" y2="155.6" stroke="#3a8449" stroke-width="0.4" opacity="0.45"/><line x1="750.4" y1="168.6" x2="750.4" y2="182.6" stroke="#5f6a3c" stroke-width="0.4" opacity="0.45"/><line x1="811.2" y1="321.5" x2="819.2" y2="321.5" stroke="#3a8449" stroke-width="0.4" opacity="0.45"/><line x1="767.4" y1="358.7" x2="767.4" y2="362.7" stroke="#1f5a44" stroke-width="0.4" opacity="0.45"/><line x1="882.8" y1="192.0" x2="882.8" y2="196.0" stroke="#5f6a3c" stroke-width="0.4" opacity="0.45"/><line x1="825.6" y1="189.5" x2="833.6" y2="189.5" stroke="#1f5a44" stroke-width="0.4" opacity="0.45"/><line x1="884.7" y1="78.9" x2="884.7" y2="84.9" stroke="#5f6a3c" stroke-width="0.4" opacity="0.45"/><line x1="880.8" y1="268.9" x2="880.8" y2="282.9" stroke="#1f5a44" stroke-width="0.4" opacity="0.45"/><line x1="706.6" y1="141.8" x2="710.6" y2="141.8" stroke="#3a8449" stroke-width="0.4" opacity="0.45"/><line x1="876.4" y1="232.1" x2="884.4" y2="232.1" stroke="#1f5a44" stroke-width="0.4" opacity="0.45"/><line x1="719.7" y1="148.6" x2="719.7" y2="162.6" stroke="#3a8449" stroke-width="0.4" opacity="0.45"/><line x1="888.0" y1="171.1" x2="888.0" y2="177.1" stroke="#3a8449" stroke-width="0.4" opacity="0.45"/><line x1="826.5" y1="300.2" x2="826.5" y2="306.2" stroke="#1f5a44" stroke-width="0.4" opacity="0.45"/><line x1="854.7" y1="293.1" x2="854.7" y2="303.1" stroke="#5f6a3c" stroke-width="0.4" opacity="0.45"/><line x1="836.5" y1="239.8" x2="836.5" y2="249.8" stroke="#1f5a44" stroke-width="0.4" opacity="0.45"/><line x1="701.0" y1="259.7" x2="701.0" y2="267.7" stroke="#5f6a3c" stroke-width="0.4" opacity="0.45"/><line x1="765.3" y1="296.8" x2="773.3" y2="296.8" stroke="#1f5a44" stroke-width="0.4" opacity="0.45"/><line x1="719.3" y1="177.5" x2="719.3" y2="187.5" stroke="#3a8449" stroke-width="0.4" opacity="0.45"/><line x1="734.8" y1="341.9" x2="744.8" y2="341.9" stroke="#3a8449" stroke-width="0.4" opacity="0.45"/><line x1="786.5" y1="120.8" x2="786.5" y2="126.8" stroke="#1f5a44" stroke-width="0.4" opacity="0.45"/><line x1="645.8" y1="6.2" x2="649.8" y2="6.2" stroke="#1f5a44" stroke-width="0.4" opacity="0.45"/><line x1="668.0" y1="54.2" x2="668.0" y2="60.2" stroke="#3a8449" stroke-width="0.4" opacity="0.45"/><line x1="730.7" y1="57.9" x2="730.7" y2="67.9" stroke="#3a8449" stroke-width="0.4" opacity="0.45"/><line x1="818.1" y1="359.6" x2="822.1" y2="359.6" stroke="#1f5a44" stroke-width="0.4" opacity="0.45"/><line x1="819.4" y1="196.3" x2="819.4" y2="206.3" stroke="#3a8449" stroke-width="0.4" opacity="0.45"/><line x1="709.7" y1="87.7" x2="715.7" y2="87.7" stroke="#5f6a3c" stroke-width="0.4" opacity="0.45"/><line x1="657.0" y1="173.0" x2="663.0" y2="173.0" stroke="#5f6a3c" stroke-width="0.4" opacity="0.45"/><line x1="830.1" y1="60.7" x2="830.1" y2="68.7" stroke="#5f6a3c" stroke-width="0.4" opacity="0.45"/><line x1="769.4" y1="110.6" x2="779.4" y2="110.6" stroke="#1f5a44" stroke-width="0.4" opacity="0.45"/><line x1="898.0" y1="249.4" x2="898.0" y2="255.4" stroke="#1f5a44" stroke-width="0.4" opacity="0.45"/><line x1="816.7" y1="342.9" x2="816.7" y2="350.9" stroke="#3a8449" stroke-width="0.4" opacity="0.45"/><line x1="766.1" y1="330.5" x2="766.1" y2="334.5" stroke="#3a8449" stroke-width="0.4" opacity="0.45"/><line x1="802.1" y1="125.9" x2="810.1" y2="125.9" stroke="#1f5a44" stroke-width="0.4" opacity="0.45"/><line x1="776.5" y1="284.0" x2="782.5" y2="284.0" stroke="#1f5a44" stroke-width="0.4" opacity="0.45"/><line x1="750.1" y1="204.8" x2="758.1" y2="204.8" stroke="#1f5a44" stroke-width="0.4" opacity="0.45"/><line x1="768.4" y1="124.1" x2="768.4" y2="132.1" stroke="#1f5a44" stroke-width="0.4" opacity="0.45"/><line x1="809.6" y1="291.9" x2="817.6" y2="291.9" stroke="#3a8449" stroke-width="0.4" opacity="0.45"/><line x1="718.6" y1="216.6" x2="722.6" y2="216.6" stroke="#3a8449" stroke-width="0.4" opacity="0.45"/><line x1="783.9" y1="150.6" x2="797.9" y2="150.6" stroke="#3a8449" stroke-width="0.4" opacity="0.45"/><line x1="669.8" y1="19.0" x2="669.8" y2="29.0" stroke="#3a8449" stroke-width="0.4" opacity="0.45"/><line x1="874.9" y1="225.9" x2="874.9" y2="239.9" stroke="#3a8449" stroke-width="0.4" opacity="0.45"/><line x1="820.3" y1="220.2" x2="824.3" y2="220.2" stroke="#3a8449" stroke-width="0.4" opacity="0.45"/><line x1="804.2" y1="230.9" x2="804.2" y2="236.9" stroke="#3a8449" stroke-width="0.4" opacity="0.45"/><line x1="864.5" y1="156.3" x2="868.5" y2="156.3" stroke="#3a8449" stroke-width="0.4" opacity="0.45"/><line x1="852.6" y1="289.9" x2="852.6" y2="303.9" stroke="#1f5a44" stroke-width="0.4" opacity="0.45"/><line x1="689.3" y1="14.5" x2="689.3" y2="18.5" stroke="#5f6a3c" stroke-width="0.4" opacity="0.45"/><line x1="790.0" y1="336.5" x2="790.0" y2="346.5" stroke="#3a8449" stroke-width="0.4" opacity="0.45"/><line x1="840.1" y1="156.1" x2="850.1" y2="156.1" stroke="#5f6a3c" stroke-width="0.4" opacity="0.45"/><line x1="816.1" y1="219.4" x2="816.1" y2="225.4" stroke="#5f6a3c" stroke-width="0.4" opacity="0.45"/><line x1="782.5" y1="32.4" x2="782.5" y2="42.4" stroke="#3a8449" stroke-width="0.4" opacity="0.45"/><line x1="802.5" y1="158.3" x2="802.5" y2="162.3" stroke="#3a8449" stroke-width="0.4" opacity="0.45"/><line x1="861.8" y1="81.9" x2="865.8" y2="81.9" stroke="#3a8449" stroke-width="0.4" opacity="0.45"/><line x1="712.5" y1="210.3" x2="712.5" y2="220.3" stroke="#3a8449" stroke-width="0.4" opacity="0.45"/><line x1="735.7" y1="275.5" x2="741.7" y2="275.5" stroke="#3a8449" stroke-width="0.4" opacity="0.45"/><line x1="784.7" y1="184.3" x2="784.7" y2="192.3" stroke="#3a8449" stroke-width="0.4" opacity="0.45"/><line x1="644.9" y1="7.4" x2="658.9" y2="7.4" stroke="#3a8449" stroke-width="0.4" opacity="0.45"/><line x1="722.0" y1="221.6" x2="732.0" y2="221.6" stroke="#3a8449" stroke-width="0.4" opacity="0.45"/><line x1="884.9" y1="268.4" x2="894.9" y2="268.4" stroke="#3a8449" stroke-width="0.4" opacity="0.45"/><line x1="846.1" y1="135.0" x2="852.1" y2="135.0" stroke="#5f6a3c" stroke-width="0.4" opacity="0.45"/><line x1="841.2" y1="167.7" x2="849.2" y2="167.7" stroke="#1f5a44" stroke-width="0.4" opacity="0.45"/><line x1="822.0" y1="304.8" x2="822.0" y2="312.8" stroke="#3a8449" stroke-width="0.4" opacity="0.45"/><line x1="795.9" y1="114.9" x2="805.9" y2="114.9" stroke="#3a8449" stroke-width="0.4" opacity="0.45"/><line x1="817.3" y1="222.3" x2="823.3" y2="222.3" stroke="#5f6a3c" stroke-width="0.4" opacity="0.45"/><line x1="642.4" y1="98.3" x2="642.4" y2="108.3" stroke="#3a8449" stroke-width="0.4" opacity="0.45"/><line x1="850.9" y1="326.8" x2="850.9" y2="330.8" stroke="#1f5a44" stroke-width="0.4" opacity="0.45"/><line x1="849.8" y1="319.4" x2="863.8" y2="319.4" stroke="#3a8449" stroke-width="0.4" opacity="0.45"/><line x1="859.9" y1="297.4" x2="859.9" y2="307.4" stroke="#1f5a44" stroke-width="0.4" opacity="0.45"/><line x1="780.2" y1="179.4" x2="780.2" y2="189.4" stroke="#3a8449" stroke-width="0.4" opacity="0.45"/><line x1="826.9" y1="361.5" x2="826.9" y2="369.5" stroke="#3a8449" stroke-width="0.4" opacity="0.45"/><line x1="761.1" y1="77.6" x2="761.1" y2="85.6" stroke="#3a8449" stroke-width="0.4" opacity="0.45"/><line x1="759.7" y1="34.1" x2="767.7" y2="34.1" stroke="#3a8449" stroke-width="0.4" opacity="0.45"/><line x1="790.4" y1="330.3" x2="804.4" y2="330.3" stroke="#1f5a44" stroke-width="0.4" opacity="0.45"/><line x1="792.9" y1="71.2" x2="798.9" y2="71.2" stroke="#3a8449" stroke-width="0.4" opacity="0.45"/><line x1="821.5" y1="134.8" x2="835.5" y2="134.8" stroke="#1f5a44" stroke-width="0.4" opacity="0.45"/><line x1="774.4" y1="56.5" x2="778.4" y2="56.5" stroke="#5f6a3c" stroke-width="0.4" opacity="0.45"/><line x1="843.6" y1="59.2" x2="857.6" y2="59.2" stroke="#3a8449" stroke-width="0.4" opacity="0.45"/><line x1="775.0" y1="9.5" x2="775.0" y2="13.5" stroke="#3a8449" stroke-width="0.4" opacity="0.45"/><line x1="863.7" y1="180.0" x2="877.7" y2="180.0" stroke="#3a8449" stroke-width="0.4" opacity="0.45"/><line x1="841.5" y1="157.9" x2="851.5" y2="157.9" stroke="#3a8449" stroke-width="0.4" opacity="0.45"/><line x1="651.7" y1="75.6" x2="657.7" y2="75.6" stroke="#5f6a3c" stroke-width="0.4" opacity="0.45"/><line x1="864.9" y1="169.7" x2="864.9" y2="173.7" stroke="#5f6a3c" stroke-width="0.4" opacity="0.45"/><line x1="822.8" y1="34.9" x2="822.8" y2="42.9" stroke="#3a8449" stroke-width="0.4" opacity="0.45"/><line x1="886.8" y1="247.1" x2="896.8" y2="247.1" stroke="#3a8449" stroke-width="0.4" opacity="0.45"/><line x1="895.9" y1="83.2" x2="895.9" y2="87.2" stroke="#1f5a44" stroke-width="0.4" opacity="0.45"/><line x1="708.0" y1="189.9" x2="718.0" y2="189.9" stroke="#3a8449" stroke-width="0.4" opacity="0.45"/><line x1="723.3" y1="4.1" x2="723.3" y2="10.1" stroke="#1f5a44" stroke-width="0.4" opacity="0.45"/><line x1="755.0" y1="240.8" x2="765.0" y2="240.8" stroke="#1f5a44" stroke-width="0.4" opacity="0.45"/><line x1="741.9" y1="139.2" x2="751.9" y2="139.2" stroke="#3a8449" stroke-width="0.4" opacity="0.45"/><line x1="848.7" y1="336.6" x2="848.7" y2="340.6" stroke="#5f6a3c" stroke-width="0.4" opacity="0.45"/><line x1="691.9" y1="15.2" x2="691.9" y2="21.2" stroke="#3a8449" stroke-width="0.4" opacity="0.45"/><line x1="863.9" y1="327.3" x2="863.9" y2="333.3" stroke="#5f6a3c" stroke-width="0.4" opacity="0.45"/><line x1="879.0" y1="142.9" x2="883.0" y2="142.9" stroke="#3a8449" stroke-width="0.4" opacity="0.45"/><line x1="729.0" y1="303.2" x2="729.0" y2="313.2" stroke="#3a8449" stroke-width="0.4" opacity="0.45"/><line x1="678.5" y1="83.1" x2="678.5" y2="87.1" stroke="#3a8449" stroke-width="0.4" opacity="0.45"/><line x1="783.7" y1="55.0" x2="789.7" y2="55.0" stroke="#1f5a44" stroke-width="0.4" opacity="0.45"/><line x1="705.2" y1="11.3" x2="719.2" y2="11.3" stroke="#1f5a44" stroke-width="0.4" opacity="0.45"/><line x1="685.0" y1="181.7" x2="685.0" y2="189.7" stroke="#5f6a3c" stroke-width="0.4" opacity="0.45"/><line x1="813.1" y1="79.3" x2="823.1" y2="79.3" stroke="#1f5a44" stroke-width="0.4" opacity="0.45"/><line x1="835.2" y1="357.3" x2="835.2" y2="367.3" stroke="#1f5a44" stroke-width="0.4" opacity="0.45"/><line x1="878.8" y1="37.7" x2="878.8" y2="45.7" stroke="#5f6a3c" stroke-width="0.4" opacity="0.45"/><line x1="717.1" y1="360.2" x2="717.1" y2="364.2" stroke="#5f6a3c" stroke-width="0.4" opacity="0.45"/><line x1="729.3" y1="53.3" x2="733.3" y2="53.3" stroke="#1f5a44" stroke-width="0.4" opacity="0.45"/><line x1="753.4" y1="335.8" x2="753.4" y2="341.8" stroke="#1f5a44" stroke-width="0.4" opacity="0.45"/><line x1="677.3" y1="67.9" x2="683.3" y2="67.9" stroke="#3a8449" stroke-width="0.4" opacity="0.45"/><line x1="662.3" y1="34.0" x2="662.3" y2="48.0" stroke="#5f6a3c" stroke-width="0.4" opacity="0.45"/><line x1="686.9" y1="52.2" x2="692.9" y2="52.2" stroke="#1f5a44" stroke-width="0.4" opacity="0.45"/><line x1="746.5" y1="266.1" x2="750.5" y2="266.1" stroke="#1f5a44" stroke-width="0.4" opacity="0.45"/><line x1="857.5" y1="318.4" x2="867.5" y2="318.4" stroke="#3a8449" stroke-width="0.4" opacity="0.45"/><line x1="875.0" y1="176.4" x2="883.0" y2="176.4" stroke="#3a8449" stroke-width="0.4" opacity="0.45"/><line x1="854.9" y1="136.4" x2="854.9" y2="142.4" stroke="#1f5a44" stroke-width="0.4" opacity="0.45"/><line x1="861.7" y1="132.4" x2="871.7" y2="132.4" stroke="#3a8449" stroke-width="0.4" opacity="0.45"/><line x1="824.9" y1="300.9" x2="824.9" y2="308.9" stroke="#5f6a3c" stroke-width="0.4" opacity="0.45"/><line x1="871.9" y1="108.7" x2="875.9" y2="108.7" stroke="#5f6a3c" stroke-width="0.4" opacity="0.45"/><line x1="676.4" y1="91.1" x2="676.4" y2="95.1" stroke="#3a8449" stroke-width="0.4" opacity="0.45"/><line x1="733.2" y1="189.9" x2="763.2" y2="189.9" stroke="#3a8449" stroke-width="0.5" opacity="0.5"/><line x1="883.4" y1="258.2" x2="883.4" y2="270.2" stroke="#3a8449" stroke-width="0.5" opacity="0.5"/><line x1="826.1" y1="214.2" x2="834.1" y2="214.2" stroke="#5f6a3c" stroke-width="0.5" opacity="0.5"/><line x1="872.2" y1="254.7" x2="877.2" y2="254.7" stroke="#3a8449" stroke-width="0.5" opacity="0.5"/><line x1="797.7" y1="220.1" x2="809.7" y2="220.1" stroke="#3a8449" stroke-width="0.5" opacity="0.5"/><line x1="780.3" y1="161.9" x2="780.3" y2="191.9" stroke="#479a52" stroke-width="0.5" opacity="0.5"/><line x1="729.1" y1="231.7" x2="729.1" y2="249.7" stroke="#479a52" stroke-width="0.5" opacity="0.5"/><line x1="703.7" y1="241.6" x2="721.7" y2="241.6" stroke="#3a8449" stroke-width="0.5" opacity="0.5"/><line x1="886.4" y1="264.3" x2="898.4" y2="264.3" stroke="#5f6a3c" stroke-width="0.5" opacity="0.5"/><line x1="766.3" y1="209.7" x2="766.3" y2="239.7" stroke="#3a8449" stroke-width="0.5" opacity="0.5"/><line x1="867.8" y1="148.6" x2="867.8" y2="178.6" stroke="#479a52" stroke-width="0.5" opacity="0.5"/><line x1="885.0" y1="179.9" x2="900" y2="179.9" stroke="#3a8449" stroke-width="0.5" opacity="0.5"/><line x1="805.1" y1="151.1" x2="823.1" y2="151.1" stroke="#479a52" stroke-width="0.5" opacity="0.5"/><line x1="704.1" y1="162.3" x2="704.1" y2="180.3" stroke="#5f6a3c" stroke-width="0.5" opacity="0.5"/><line x1="860.2" y1="281.5" x2="860.2" y2="286.5" stroke="#3a8449" stroke-width="0.5" opacity="0.5"/><line x1="822.9" y1="286.9" x2="822.9" y2="316.9" stroke="#3a8449" stroke-width="0.5" opacity="0.5"/><line x1="859.7" y1="145.7" x2="864.7" y2="145.7" stroke="#3a8449" stroke-width="0.5" opacity="0.5"/><line x1="702.7" y1="177.9" x2="707.7" y2="177.9" stroke="#3a8449" stroke-width="0.5" opacity="0.5"/><line x1="768.8" y1="166.7" x2="773.8" y2="166.7" stroke="#3a8449" stroke-width="0.5" opacity="0.5"/><line x1="816.9" y1="289.1" x2="834.9" y2="289.1" stroke="#3a8449" stroke-width="0.5" opacity="0.5"/><line x1="875.3" y1="286.5" x2="900" y2="286.5" stroke="#3a8449" stroke-width="0.5" opacity="0.5"/><line x1="845.7" y1="258.5" x2="845.7" y2="270.5" stroke="#5f6a3c" stroke-width="0.5" opacity="0.5"/><line x1="812.9" y1="244.1" x2="820.9" y2="244.1" stroke="#3a8449" stroke-width="0.5" opacity="0.5"/><line x1="808.5" y1="238.0" x2="826.5" y2="238.0" stroke="#3a8449" stroke-width="0.5" opacity="0.5"/><line x1="766.1" y1="170.2" x2="766.1" y2="200.2" stroke="#5f6a3c" stroke-width="0.5" opacity="0.5"/><line x1="778.5" y1="287.9" x2="786.5" y2="287.9" stroke="#479a52" stroke-width="0.5" opacity="0.5"/><line x1="764.4" y1="183.2" x2="772.4" y2="183.2" stroke="#3a8449" stroke-width="0.5" opacity="0.5"/><line x1="704.3" y1="228.2" x2="734.3" y2="228.2" stroke="#3a8449" stroke-width="0.5" opacity="0.5"/><line x1="712.3" y1="202.1" x2="712.3" y2="220.1" stroke="#3a8449" stroke-width="0.5" opacity="0.5"/><line x1="721.6" y1="176.0" x2="729.6" y2="176.0" stroke="#5f6a3c" stroke-width="0.5" opacity="0.5"/><line x1="769.8" y1="248.1" x2="769.8" y2="278.1" stroke="#3a8449" stroke-width="0.5" opacity="0.5"/><line x1="802.5" y1="258.2" x2="802.5" y2="276.2" stroke="#3a8449" stroke-width="0.5" opacity="0.5"/><line x1="840.3" y1="286.4" x2="840.3" y2="294.4" stroke="#5f6a3c" stroke-width="0.5" opacity="0.5"/><line x1="700.9" y1="262.5" x2="730.9" y2="262.5" stroke="#3a8449" stroke-width="0.5" opacity="0.5"/><line x1="890.6" y1="231.5" x2="890.6" y2="249.5" stroke="#3a8449" stroke-width="0.5" opacity="0.5"/><line x1="820.3" y1="200.7" x2="838.3" y2="200.7" stroke="#5f6a3c" stroke-width="0.5" opacity="0.5"/><line x1="769.8" y1="196.5" x2="769.8" y2="226.5" stroke="#5f6a3c" stroke-width="0.5" opacity="0.5"/><line x1="701.3" y1="259.3" x2="719.3" y2="259.3" stroke="#5f6a3c" stroke-width="0.5" opacity="0.5"/><line x1="736.5" y1="188.6" x2="736.5" y2="196.6" stroke="#5f6a3c" stroke-width="0.5" opacity="0.5"/><line x1="815.2" y1="154.1" x2="815.2" y2="166.1" stroke="#3a8449" stroke-width="0.5" opacity="0.5"/><line x1="820.4" y1="178.8" x2="820.4" y2="190.8" stroke="#479a52" stroke-width="0.5" opacity="0.5"/><line x1="876.5" y1="292.9" x2="881.5" y2="292.9" stroke="#3a8449" stroke-width="0.5" opacity="0.5"/><line x1="877.4" y1="188.0" x2="900" y2="188.0" stroke="#3a8449" stroke-width="0.5" opacity="0.5"/><line x1="897.7" y1="222.8" x2="900" y2="222.8" stroke="#5f6a3c" stroke-width="0.5" opacity="0.5"/><line x1="770.8" y1="235.2" x2="770.8" y2="247.2" stroke="#5f6a3c" stroke-width="0.5" opacity="0.5"/><line x1="833.9" y1="224.0" x2="838.9" y2="224.0" stroke="#5f6a3c" stroke-width="0.5" opacity="0.5"/><line x1="779.4" y1="229.8" x2="779.4" y2="259.8" stroke="#479a52" stroke-width="0.5" opacity="0.5"/><line x1="891.0" y1="217.9" x2="891.0" y2="235.9" stroke="#3a8449" stroke-width="0.5" opacity="0.5"/><line x1="847.8" y1="154.8" x2="859.8" y2="154.8" stroke="#3a8449" stroke-width="0.5" opacity="0.5"/><line x1="714.9" y1="189.7" x2="714.9" y2="197.7" stroke="#3a8449" stroke-width="0.5" opacity="0.5"/><line x1="758.4" y1="194.9" x2="758.4" y2="224.9" stroke="#5f6a3c" stroke-width="0.5" opacity="0.5"/><line x1="803.8" y1="270.6" x2="811.8" y2="270.6" stroke="#479a52" stroke-width="0.5" opacity="0.5"/><line x1="711.9" y1="230.4" x2="711.9" y2="235.4" stroke="#3a8449" stroke-width="0.5" opacity="0.5"/><line x1="825.0" y1="255.7" x2="825.0" y2="273.7" stroke="#3a8449" stroke-width="0.5" opacity="0.5"/><line x1="760.7" y1="250.5" x2="765.7" y2="250.5" stroke="#3a8449" stroke-width="0.5" opacity="0.5"/><line x1="719.5" y1="142.5" x2="724.5" y2="142.5" stroke="#479a52" stroke-width="0.5" opacity="0.5"/><line x1="852.3" y1="230.7" x2="852.3" y2="260.7" stroke="#479a52" stroke-width="0.5" opacity="0.5"/><line x1="781.4" y1="159.4" x2="789.4" y2="159.4" stroke="#3a8449" stroke-width="0.5" opacity="0.5"/><line x1="715.1" y1="291.7" x2="715.1" y2="309.7" stroke="#5f6a3c" stroke-width="0.5" opacity="0.5"/><line x1="859.7" y1="149.9" x2="864.7" y2="149.9" stroke="#3a8449" stroke-width="0.5" opacity="0.5"/><line x1="747.2" y1="184.1" x2="747.2" y2="189.1" stroke="#3a8449" stroke-width="0.5" opacity="0.5"/><line x1="870.1" y1="291.6" x2="875.1" y2="291.6" stroke="#3a8449" stroke-width="0.5" opacity="0.5"/><line x1="823.6" y1="143.1" x2="823.6" y2="151.1" stroke="#5f6a3c" stroke-width="0.5" opacity="0.5"/><line x1="890.0" y1="210.3" x2="900" y2="210.3" stroke="#479a52" stroke-width="0.5" opacity="0.5"/><line x1="708.7" y1="288.9" x2="716.7" y2="288.9" stroke="#3a8449" stroke-width="0.5" opacity="0.5"/><line x1="871.7" y1="212.9" x2="871.7" y2="230.9" stroke="#3a8449" stroke-width="0.5" opacity="0.5"/><line x1="798.1" y1="292.0" x2="798.1" y2="300.0" stroke="#5f6a3c" stroke-width="0.5" opacity="0.5"/><line x1="815.8" y1="206.2" x2="833.8" y2="206.2" stroke="#5f6a3c" stroke-width="0.5" opacity="0.5"/><line x1="871.9" y1="154.0" x2="879.9" y2="154.0" stroke="#3a8449" stroke-width="0.5" opacity="0.5"/><line x1="701.5" y1="281.2" x2="719.5" y2="281.2" stroke="#3a8449" stroke-width="0.5" opacity="0.5"/><line x1="805.7" y1="201.7" x2="805.7" y2="219.7" stroke="#3a8449" stroke-width="0.5" opacity="0.5"/><line x1="783.6" y1="286.1" x2="813.6" y2="286.1" stroke="#479a52" stroke-width="0.5" opacity="0.5"/><line x1="792.5" y1="195.1" x2="810.5" y2="195.1" stroke="#3a8449" stroke-width="0.5" opacity="0.5"/><line x1="705.0" y1="268.8" x2="713.0" y2="268.8" stroke="#479a52" stroke-width="0.5" opacity="0.5"/><line x1="753.4" y1="273.6" x2="761.4" y2="273.6" stroke="#5f6a3c" stroke-width="0.5" opacity="0.5"/><line x1="857.4" y1="178.4" x2="869.4" y2="178.4" stroke="#3a8449" stroke-width="0.5" opacity="0.5"/><line x1="780.2" y1="240.7" x2="810.2" y2="240.7" stroke="#479a52" stroke-width="0.5" opacity="0.5"/><line x1="794.2" y1="172.7" x2="794.2" y2="190.7" stroke="#479a52" stroke-width="0.5" opacity="0.5"/><line x1="897.6" y1="235.4" x2="900" y2="235.4" stroke="#3a8449" stroke-width="0.5" opacity="0.5"/><line x1="780.0" y1="221.6" x2="780.0" y2="229.6" stroke="#3a8449" stroke-width="0.5" opacity="0.5"/><line x1="718.1" y1="276.3" x2="718.1" y2="294.3" stroke="#3a8449" stroke-width="0.5" opacity="0.5"/><line x1="812.4" y1="189.7" x2="812.4" y2="207.7" stroke="#3a8449" stroke-width="0.5" opacity="0.5"/><line x1="853.7" y1="177.1" x2="861.7" y2="177.1" stroke="#3a8449" stroke-width="0.5" opacity="0.5"/><line x1="880.9" y1="268.8" x2="892.9" y2="268.8" stroke="#479a52" stroke-width="0.5" opacity="0.5"/><line x1="761.6" y1="176.2" x2="769.6" y2="176.2" stroke="#5f6a3c" stroke-width="0.5" opacity="0.5"/><line x1="779.9" y1="285.4" x2="787.9" y2="285.4" stroke="#3a8449" stroke-width="0.5" opacity="0.5"/><line x1="772.6" y1="267.9" x2="784.6" y2="267.9" stroke="#5f6a3c" stroke-width="0.5" opacity="0.5"/><line x1="839.3" y1="214.0" x2="839.3" y2="232.0" stroke="#3a8449" stroke-width="0.5" opacity="0.5"/><line x1="719.3" y1="186.6" x2="719.3" y2="198.6" stroke="#479a52" stroke-width="0.5" opacity="0.5"/><line x1="708.0" y1="146.4" x2="716.0" y2="146.4" stroke="#5f6a3c" stroke-width="0.5" opacity="0.5"/><line x1="760.0" y1="200.9" x2="760.0" y2="205.9" stroke="#3a8449" stroke-width="0.5" opacity="0.5"/><line x1="886.4" y1="230.3" x2="886.4" y2="238.3" stroke="#5f6a3c" stroke-width="0.5" opacity="0.5"/><line x1="750.4" y1="209.6" x2="750.4" y2="239.6" stroke="#3a8449" stroke-width="0.5" opacity="0.5"/><line x1="722.2" y1="262.2" x2="722.2" y2="274.2" stroke="#3a8449" stroke-width="0.5" opacity="0.5"/><line x1="815.9" y1="251.4" x2="823.9" y2="251.4" stroke="#3a8449" stroke-width="0.5" opacity="0.5"/><line x1="763.1" y1="264.3" x2="775.1" y2="264.3" stroke="#3a8449" stroke-width="0.5" opacity="0.5"/><line x1="847.3" y1="299.7" x2="877.3" y2="299.7" stroke="#479a52" stroke-width="0.5" opacity="0.5"/><line x1="717.8" y1="291.4" x2="717.8" y2="309.4" stroke="#5f6a3c" stroke-width="0.5" opacity="0.5"/><line x1="836.9" y1="258.2" x2="836.9" y2="276.2" stroke="#3a8449" stroke-width="0.5" opacity="0.5"/><line x1="740.8" y1="247.7" x2="740.8" y2="255.7" stroke="#5f6a3c" stroke-width="0.5" opacity="0.5"/><line x1="708.7" y1="252.4" x2="738.7" y2="252.4" stroke="#3a8449" stroke-width="0.5" opacity="0.5"/><line x1="732.4" y1="264.9" x2="740.4" y2="264.9" stroke="#3a8449" stroke-width="0.5" opacity="0.5"/><line x1="711.8" y1="197.3" x2="729.8" y2="197.3" stroke="#3a8449" stroke-width="0.5" opacity="0.5"/><line x1="761.5" y1="161.8" x2="779.5" y2="161.8" stroke="#5f6a3c" stroke-width="0.5" opacity="0.5"/><line x1="747.9" y1="222.5" x2="747.9" y2="240.5" stroke="#479a52" stroke-width="0.5" opacity="0.5"/><line x1="769.6" y1="187.9" x2="777.6" y2="187.9" stroke="#479a52" stroke-width="0.5" opacity="0.5"/><line x1="861.4" y1="227.7" x2="861.4" y2="235.7" stroke="#479a52" stroke-width="0.5" opacity="0.5"/><line x1="791.3" y1="262.6" x2="791.3" y2="270.6" stroke="#3a8449" stroke-width="0.5" opacity="0.5"/><line x1="702.4" y1="217.9" x2="702.4" y2="222.9" stroke="#3a8449" stroke-width="0.5" opacity="0.5"/><line x1="760.2" y1="157.7" x2="760.2" y2="169.7" stroke="#5f6a3c" stroke-width="0.5" opacity="0.5"/><line x1="731.9" y1="211.2" x2="761.9" y2="211.2" stroke="#3a8449" stroke-width="0.5" opacity="0.5"/><line x1="810.4" y1="147.3" x2="828.4" y2="147.3" stroke="#5f6a3c" stroke-width="0.5" opacity="0.5"/><line x1="842.0" y1="296.8" x2="872.0" y2="296.8" stroke="#3a8449" stroke-width="0.5" opacity="0.5"/><line x1="796.8" y1="209.5" x2="804.8" y2="209.5" stroke="#3a8449" stroke-width="0.5" opacity="0.5"/><line x1="882.1" y1="243.1" x2="882.1" y2="273.1" stroke="#3a8449" stroke-width="0.5" opacity="0.5"/><line x1="715.5" y1="259.6" x2="715.5" y2="264.6" stroke="#5f6a3c" stroke-width="0.5" opacity="0.5"/><line x1="758.7" y1="169.7" x2="788.7" y2="169.7" stroke="#479a52" stroke-width="0.5" opacity="0.5"/><line x1="842.3" y1="189.7" x2="872.3" y2="189.7" stroke="#3a8449" stroke-width="0.5" opacity="0.5"/><line x1="828.2" y1="197.0" x2="836.2" y2="197.0" stroke="#3a8449" stroke-width="0.5" opacity="0.5"/><line x1="882.1" y1="274.1" x2="894.1" y2="274.1" stroke="#479a52" stroke-width="0.5" opacity="0.5"/><line x1="721.2" y1="268.4" x2="721.2" y2="286.4" stroke="#3a8449" stroke-width="0.5" opacity="0.5"/><line x1="797.9" y1="219.9" x2="797.9" y2="227.9" stroke="#3a8449" stroke-width="0.5" opacity="0.5"/><line x1="824.0" y1="162.7" x2="832.0" y2="162.7" stroke="#479a52" stroke-width="0.5" opacity="0.5"/><line x1="826.1" y1="204.2" x2="831.1" y2="204.2" stroke="#5f6a3c" stroke-width="0.5" opacity="0.5"/><line x1="743.2" y1="199.6" x2="748.2" y2="199.6" stroke="#5f6a3c" stroke-width="0.5" opacity="0.5"/><line x1="714.3" y1="148.8" x2="732.3" y2="148.8" stroke="#3a8449" stroke-width="0.5" opacity="0.5"/><line x1="701.7" y1="293.0" x2="709.7" y2="293.0" stroke="#479a52" stroke-width="0.5" opacity="0.5"/><line x1="700.8" y1="268.7" x2="712.8" y2="268.7" stroke="#479a52" stroke-width="0.5" opacity="0.5"/><line x1="807.5" y1="222.7" x2="807.5" y2="240.7" stroke="#479a52" stroke-width="0.5" opacity="0.5"/><line x1="890.4" y1="239.2" x2="890.4" y2="244.2" stroke="#3a8449" stroke-width="0.5" opacity="0.5"/><line x1="758.8" y1="231.4" x2="758.8" y2="243.4" stroke="#5f6a3c" stroke-width="0.5" opacity="0.5"/><line x1="727.1" y1="278.4" x2="727.1" y2="308.4" stroke="#3a8449" stroke-width="0.5" opacity="0.5"/><line x1="744.1" y1="258.4" x2="744.1" y2="263.4" stroke="#479a52" stroke-width="0.5" opacity="0.5"/><line x1="773.7" y1="232.9" x2="791.7" y2="232.9" stroke="#3a8449" stroke-width="0.5" opacity="0.5"/><line x1="811.8" y1="203.4" x2="816.8" y2="203.4" stroke="#479a52" stroke-width="0.5" opacity="0.5"/><line x1="876.2" y1="227.7" x2="876.2" y2="232.7" stroke="#479a52" stroke-width="0.5" opacity="0.5"/><line x1="750.2" y1="155.2" x2="750.2" y2="185.2" stroke="#3a8449" stroke-width="0.5" opacity="0.5"/><line x1="744.9" y1="213.3" x2="744.9" y2="243.3" stroke="#3a8449" stroke-width="0.5" opacity="0.5"/><line x1="880.0" y1="230.7" x2="880.0" y2="248.7" stroke="#3a8449" stroke-width="0.5" opacity="0.5"/><line x1="726.6" y1="220.5" x2="726.6" y2="250.5" stroke="#3a8449" stroke-width="0.5" opacity="0.5"/><line x1="890.2" y1="222.4" x2="900" y2="222.4" stroke="#5f6a3c" stroke-width="0.5" opacity="0.5"/><line x1="891.7" y1="170.7" x2="900" y2="170.7" stroke="#3a8449" stroke-width="0.5" opacity="0.5"/><line x1="853.7" y1="149.2" x2="861.7" y2="149.2" stroke="#3a8449" stroke-width="0.5" opacity="0.5"/><line x1="703.0" y1="235.1" x2="711.0" y2="235.1" stroke="#5f6a3c" stroke-width="0.5" opacity="0.5"/><line x1="840.1" y1="208.2" x2="840.1" y2="213.2" stroke="#479a52" stroke-width="0.5" opacity="0.5"/><line x1="881.7" y1="279.3" x2="881.7" y2="287.3" stroke="#3a8449" stroke-width="0.5" opacity="0.5"/><line x1="767.6" y1="262.2" x2="772.6" y2="262.2" stroke="#3a8449" stroke-width="0.5" opacity="0.5"/><line x1="773.9" y1="258.0" x2="785.9" y2="258.0" stroke="#5f6a3c" stroke-width="0.5" opacity="0.5"/><line x1="819.6" y1="155.9" x2="819.6" y2="185.9" stroke="#3a8449" stroke-width="0.5" opacity="0.5"/><line x1="722.4" y1="288.1" x2="730.4" y2="288.1" stroke="#3a8449" stroke-width="0.5" opacity="0.5"/><line x1="837.4" y1="143.4" x2="867.4" y2="143.4" stroke="#5f6a3c" stroke-width="0.5" opacity="0.5"/><line x1="704.1" y1="157.7" x2="716.1" y2="157.7" stroke="#479a52" stroke-width="0.5" opacity="0.5"/><line x1="884.4" y1="279.8" x2="884.4" y2="297.8" stroke="#479a52" stroke-width="0.5" opacity="0.5"/><line x1="749.6" y1="299.6" x2="761.6" y2="299.6" stroke="#5f6a3c" stroke-width="0.5" opacity="0.5"/><line x1="767.8" y1="164.1" x2="767.8" y2="194.1" stroke="#5f6a3c" stroke-width="0.5" opacity="0.5"/><line x1="858.5" y1="145.7" x2="858.5" y2="153.7" stroke="#5f6a3c" stroke-width="0.5" opacity="0.5"/><line x1="891.6" y1="250.9" x2="900" y2="250.9" stroke="#5f6a3c" stroke-width="0.5" opacity="0.5"/><line x1="889.7" y1="222.7" x2="900" y2="222.7" stroke="#3a8449" stroke-width="0.5" opacity="0.5"/><line x1="761.6" y1="160.9" x2="791.6" y2="160.9" stroke="#3a8449" stroke-width="0.5" opacity="0.5"/><line x1="862.2" y1="256.4" x2="874.2" y2="256.4" stroke="#5f6a3c" stroke-width="0.5" opacity="0.5"/><line x1="770.0" y1="141.0" x2="800.0" y2="141.0" stroke="#5f6a3c" stroke-width="0.5" opacity="0.5"/><line x1="704.1" y1="213.5" x2="704.1" y2="243.5" stroke="#3a8449" stroke-width="0.5" opacity="0.5"/><line x1="843.9" y1="163.0" x2="861.9" y2="163.0" stroke="#3a8449" stroke-width="0.5" opacity="0.5"/><line x1="896.3" y1="197.1" x2="896.3" y2="227.1" stroke="#479a52" stroke-width="0.5" opacity="0.5"/><line x1="706.8" y1="229.7" x2="706.8" y2="234.7" stroke="#479a52" stroke-width="0.5" opacity="0.5"/><line x1="825.4" y1="241.5" x2="825.4" y2="253.5" stroke="#3a8449" stroke-width="0.5" opacity="0.5"/><line x1="747.1" y1="267.5" x2="755.1" y2="267.5" stroke="#3a8449" stroke-width="0.5" opacity="0.5"/><line x1="851.1" y1="258.3" x2="881.1" y2="258.3" stroke="#479a52" stroke-width="0.5" opacity="0.5"/><line x1="809.0" y1="205.0" x2="809.0" y2="210.0" stroke="#3a8449" stroke-width="0.5" opacity="0.5"/><line x1="875.0" y1="265.2" x2="875.0" y2="295.2" stroke="#3a8449" stroke-width="0.5" opacity="0.5"/><line x1="860.2" y1="299.5" x2="868.2" y2="299.5" stroke="#479a52" stroke-width="0.5" opacity="0.5"/><line x1="876.0" y1="247.4" x2="894.0" y2="247.4" stroke="#5f6a3c" stroke-width="0.5" opacity="0.5"/><line x1="852.9" y1="288.7" x2="882.9" y2="288.7" stroke="#3a8449" stroke-width="0.5" opacity="0.5"/><line x1="842.5" y1="180.3" x2="872.5" y2="180.3" stroke="#3a8449" stroke-width="0.5" opacity="0.5"/><line x1="737.7" y1="288.0" x2="767.7" y2="288.0" stroke="#479a52" stroke-width="0.5" opacity="0.5"/><line x1="770.0" y1="214.9" x2="770.0" y2="232.9" stroke="#3a8449" stroke-width="0.5" opacity="0.5"/><line x1="763.2" y1="168.0" x2="763.2" y2="180.0" stroke="#3a8449" stroke-width="0.5" opacity="0.5"/><line x1="824.0" y1="177.9" x2="829.0" y2="177.9" stroke="#479a52" stroke-width="0.5" opacity="0.5"/><line x1="788.7" y1="282.9" x2="800.7" y2="282.9" stroke="#3a8449" stroke-width="0.5" opacity="0.5"/><line x1="845.3" y1="294.1" x2="875.3" y2="294.1" stroke="#3a8449" stroke-width="0.5" opacity="0.5"/><rect x="860.3" y="280.1" width="4" height="3" fill="none" stroke="#3a8449" stroke-width="0.5" opacity="0.6"/><circle cx="737.3" cy="225.9" r="3.5" fill="none" stroke="#3a8449" stroke-width="0.5" opacity="0.6"/><rect x="763.9" y="144.4" width="3" height="6" fill="none" stroke="#3a8449" stroke-width="0.5" opacity="0.6"/><circle cx="796.3" cy="237.6" r="1.5" fill="none" stroke="#3a8449" stroke-width="0.5" opacity="0.6"/><rect x="711.4" y="206.3" width="5" height="4" fill="none" stroke="#3a8449" stroke-width="0.5" opacity="0.6"/><circle cx="895.6" cy="203.9" r="1.5" fill="none" stroke="#3a8449" stroke-width="0.5" opacity="0.6"/><circle cx="705.1" cy="190.7" r="2.5" fill="none" stroke="#3a8449" stroke-width="0.5" opacity="0.6"/><circle cx="711.1" cy="238.2" r="2.5" fill="none" stroke="#3a8449" stroke-width="0.5" opacity="0.6"/><rect x="731.0" y="143.0" width="3" height="4" fill="none" stroke="#3a8449" stroke-width="0.5" opacity="0.6"/><circle cx="861.2" cy="207.7" r="3.5" fill="none" stroke="#3a8449" stroke-width="0.5" opacity="0.6"/><circle cx="871.4" cy="164.5" r="3.5" fill="none" stroke="#3a8449" stroke-width="0.5" opacity="0.6"/><rect x="765.5" y="258.6" width="7" height="3" fill="none" stroke="#3a8449" stroke-width="0.5" opacity="0.6"/><circle cx="853.6" cy="189.5" r="3.5" fill="none" stroke="#3a8449" stroke-width="0.5" opacity="0.6"/><circle cx="789.7" cy="184.5" r="2.5" fill="none" stroke="#3a8449" stroke-width="0.5" opacity="0.6"/><rect x="726.1" y="141.4" width="5" height="3" fill="none" stroke="#3a8449" stroke-width="0.5" opacity="0.6"/><circle cx="895.9" cy="176.5" r="1.5" fill="none" stroke="#3a8449" stroke-width="0.5" opacity="0.6"/><rect x="885.5" y="239.9" width="4" height="6" fill="none" stroke="#3a8449" stroke-width="0.5" opacity="0.6"/><circle cx="853.9" cy="181.5" r="3.5" fill="none" stroke="#3a8449" stroke-width="0.5" opacity="0.6"/><circle cx="729.6" cy="168.4" r="1.5" fill="none" stroke="#3a8449" stroke-width="0.5" opacity="0.6"/><circle cx="804.6" cy="196.1" r="2.5" fill="none" stroke="#3a8449" stroke-width="0.5" opacity="0.6"/><circle cx="894.5" cy="219.8" r="2.5" fill="none" stroke="#3a8449" stroke-width="0.5" opacity="0.6"/><rect x="878.4" y="202.2" width="3" height="3" fill="none" stroke="#3a8449" stroke-width="0.5" opacity="0.6"/><circle cx="830.7" cy="142.5" r="2.5" fill="none" stroke="#3a8449" stroke-width="0.5" opacity="0.6"/><rect x="833.5" y="196.1" width="7" height="4" fill="none" stroke="#3a8449" stroke-width="0.5" opacity="0.6"/><circle cx="879.6" cy="200.1" r="1.5" fill="none" stroke="#3a8449" stroke-width="0.5" opacity="0.6"/><circle cx="706.1" cy="143.3" r="1.5" fill="none" stroke="#3a8449" stroke-width="0.5" opacity="0.6"/><circle cx="745.8" cy="172.5" r="3.5" fill="none" stroke="#3a8449" stroke-width="0.5" opacity="0.6"/><rect x="755.2" y="280.7" width="4" height="4" fill="none" stroke="#3a8449" stroke-width="0.5" opacity="0.6"/><rect x="870.9" y="279.1" width="4" height="4" fill="none" stroke="#3a8449" stroke-width="0.5" opacity="0.6"/><rect x="755.9" y="193.0" width="4" height="3" fill="none" stroke="#3a8449" stroke-width="0.5" opacity="0.6"/><circle cx="763.3" cy="237.6" r="1.5" fill="none" stroke="#3a8449" stroke-width="0.5" opacity="0.6"/><rect x="814.7" y="281.3" width="5" height="3" fill="none" stroke="#3a8449" stroke-width="0.5" opacity="0.6"/><rect x="854.4" y="278.1" width="4" height="4" fill="none" stroke="#3a8449" stroke-width="0.5" opacity="0.6"/><rect x="835.7" y="268.8" width="3" height="3" fill="none" stroke="#3a8449" stroke-width="0.5" opacity="0.6"/><circle cx="880.5" cy="164.1" r="1.5" fill="none" stroke="#3a8449" stroke-width="0.5" opacity="0.6"/><rect x="848.8" y="214.3" width="7" height="4" fill="none" stroke="#3a8449" stroke-width="0.5" opacity="0.6"/><rect x="827.1" y="246.5" width="5" height="3" fill="none" stroke="#3a8449" stroke-width="0.5" opacity="0.6"/><circle cx="815.9" cy="172.2" r="1.5" fill="none" stroke="#3a8449" stroke-width="0.5" opacity="0.6"/><rect x="707.5" y="220.8" width="7" height="6" fill="none" stroke="#3a8449" stroke-width="0.5" opacity="0.6"/><circle cx="720.8" cy="143.2" r="2.5" fill="none" stroke="#3a8449" stroke-width="0.5" opacity="0.6"/><circle cx="712.8" cy="157.7" r="1.5" fill="none" stroke="#3a8449" stroke-width="0.5" opacity="0.6"/><rect x="804.0" y="140.4" width="4" height="6" fill="none" stroke="#3a8449" stroke-width="0.5" opacity="0.6"/><rect x="846.2" y="220.1" width="5" height="4" fill="none" stroke="#3a8449" stroke-width="0.5" opacity="0.6"/><circle cx="889.5" cy="152.4" r="1.5" fill="none" stroke="#3a8449" stroke-width="0.5" opacity="0.6"/><rect x="844.8" y="183.7" width="5" height="4" fill="none" stroke="#3a8449" stroke-width="0.5" opacity="0.6"/><circle cx="713.6" cy="146.9" r="2.5" fill="none" stroke="#3a8449" stroke-width="0.5" opacity="0.6"/><rect x="856.3" y="292.3" width="5" height="6" fill="none" stroke="#3a8449" stroke-width="0.5" opacity="0.6"/><rect x="708.2" y="212.6" width="5" height="6" fill="none" stroke="#3a8449" stroke-width="0.5" opacity="0.6"/><circle cx="781.3" cy="298.9" r="2.5" fill="none" stroke="#3a8449" stroke-width="0.5" opacity="0.6"/><rect x="779.1" y="190.9" width="4" height="4" fill="none" stroke="#3a8449" stroke-width="0.5" opacity="0.6"/><circle cx="850.7" cy="281.1" r="3.5" fill="none" stroke="#3a8449" stroke-width="0.5" opacity="0.6"/><circle cx="701.0" cy="237.3" r="2.5" fill="none" stroke="#3a8449" stroke-width="0.5" opacity="0.6"/><circle cx="837.3" cy="256.8" r="1.5" fill="none" stroke="#3a8449" stroke-width="0.5" opacity="0.6"/><circle cx="831.4" cy="153.9" r="1.5" fill="none" stroke="#3a8449" stroke-width="0.5" opacity="0.6"/><circle cx="879.9" cy="147.9" r="2.5" fill="none" stroke="#3a8449" stroke-width="0.5" opacity="0.6"/><circle cx="835.6" cy="210.8" r="2.5" fill="none" stroke="#3a8449" stroke-width="0.5" opacity="0.6"/><circle cx="892.4" cy="140.1" r="2.5" fill="none" stroke="#3a8449" stroke-width="0.5" opacity="0.6"/><circle cx="801.0" cy="234.8" r="1.5" fill="none" stroke="#3a8449" stroke-width="0.5" opacity="0.6"/><circle cx="863.3" cy="266.6" r="2.5" fill="none" stroke="#3a8449" stroke-width="0.5" opacity="0.6"/><circle cx="841.0" cy="203.0" r="3.5" fill="none" stroke="#3a8449" stroke-width="0.5" opacity="0.6"/><path d="M650 0 Q690 40 760 45 Q800 45 830 20" fill="none" stroke="#3a8449" stroke-width="0.7" opacity="0.55"/><path d="M640 20 Q700 95 790 60" fill="none" stroke="#1f5a44" stroke-width="0.7" opacity="0.6"/><rect x="712" y="1" width="12" height="11" fill="none" stroke="#5f6a3c" stroke-width="1.0" opacity="0.9"/><rect x="714.5" y="3.5" width="7" height="6" fill="none" stroke="#5f6a3c" stroke-width="0.5" opacity="0.7"/><rect x="712" y="70" width="12" height="12" fill="none" stroke="#5f6a3c" stroke-width="1.0" opacity="0.9"/><rect x="714.5" y="72.5" width="7" height="7" fill="none" stroke="#5f6a3c" stroke-width="0.5" opacity="0.7"/><line x1="717" y1="0" x2="717" y2="290" stroke="#3a8449" stroke-width="0.7" opacity="0.7"/><line x1="744" y1="38" x2="744" y2="78" stroke="#5f6a3c" stroke-width="0.8" opacity="0.7"/><clipPath id="hc1"><rect x="717" y="96.5" width="38.5" height="19"/></clipPath><rect x="717" y="96.5" width="38.5" height="19" fill="none" stroke="#479a52" stroke-width="0.6" opacity="0.8"/><g clip-path="url(#hc1)" opacity="0.75"><line x1="697" y1="96.5" x2="716" y2="115.5" stroke="#479a52" stroke-width="0.9"/><line x1="700" y1="96.5" x2="719" y2="115.5" stroke="#479a52" stroke-width="0.9"/><line x1="703" y1="96.5" x2="722" y2="115.5" stroke="#479a52" stroke-width="0.9"/><line x1="706" y1="96.5" x2="725" y2="115.5" stroke="#479a52" stroke-width="0.9"/><line x1="709" y1="96.5" x2="728" y2="115.5" stroke="#479a52" stroke-width="0.9"/><line x1="712" y1="96.5" x2="731" y2="115.5" stroke="#479a52" stroke-width="0.9"/><line x1="715" y1="96.5" x2="734" y2="115.5" stroke="#479a52" stroke-width="0.9"/><line x1="718" y1="96.5" x2="737" y2="115.5" stroke="#479a52" stroke-width="0.9"/><line x1="721" y1="96.5" x2="740" y2="115.5" stroke="#479a52" stroke-width="0.9"/><line x1="724" y1="96.5" x2="743" y2="115.5" stroke="#479a52" stroke-width="0.9"/><line x1="727" y1="96.5" x2="746" y2="115.5" stroke="#479a52" stroke-width="0.9"/><line x1="730" y1="96.5" x2="749" y2="115.5" stroke="#479a52" stroke-width="0.9"/><line x1="733" y1="96.5" x2="752" y2="115.5" stroke="#479a52" stroke-width="0.9"/><line x1="736" y1="96.5" x2="755" y2="115.5" stroke="#479a52" stroke-width="0.9"/><line x1="739" y1="96.5" x2="758" y2="115.5" stroke="#479a52" stroke-width="0.9"/><line x1="742" y1="96.5" x2="761" y2="115.5" stroke="#479a52" stroke-width="0.9"/><line x1="745" y1="96.5" x2="764" y2="115.5" stroke="#479a52" stroke-width="0.9"/><line x1="748" y1="96.5" x2="767" y2="115.5" stroke="#479a52" stroke-width="0.9"/><line x1="751" y1="96.5" x2="770" y2="115.5" stroke="#479a52" stroke-width="0.9"/><line x1="754" y1="96.5" x2="773" y2="115.5" stroke="#479a52" stroke-width="0.9"/></g><line x1="740" y1="42" x2="770" y2="42" stroke="#5f6a3c" stroke-width="0.9" opacity="0.8"/><line x1="690" y1="83" x2="900" y2="83" stroke="#3a8449" stroke-width="0.6" opacity="0.6"/><line x1="640" y1="103" x2="770" y2="103" stroke="#3a8449" stroke-width="0.5" opacity="0.5"/><path d="M645 115 L660 100 L675 115 L660 130Z" fill="none" stroke="#3a8449" stroke-width="0.6" opacity="0.5"/><line x1="674" y1="0" x2="674" y2="130" stroke="#1f5a44" stroke-width="0.5" opacity="0.6"/><line x1="681" y1="130" x2="681" y2="200" stroke="#3a8449" stroke-width="0.5" opacity="0.6"/><rect x="666" y="293" width="42" height="49" fill="none" stroke="#3a8449" stroke-width="0.7" opacity="0.6"/><line x1="650" y1="0" x2="650" y2="372" stroke="#1f5a44" stroke-width="0.5" opacity="0.6"/><circle cx="805" cy="94" r="35" fill="none" stroke="#479a52" stroke-width="1.0" opacity="0.75"/><circle cx="805" cy="94" r="29" fill="none" stroke="#3a8449" stroke-width="0.5" opacity="0.5"/><path d="M826 0 Q862 45 872 130 L874 168" fill="none" stroke="#479a52" stroke-width="0.9" opacity="0.7"/><line x1="770" y1="15" x2="835" y2="15" stroke="#5f6a3c" stroke-width="1.1" opacity="0.9"/><line x1="770" y1="40" x2="795" y2="40" stroke="#5f6a3c" stroke-width="1.0" opacity="0.8"/><line x1="835" y1="40" x2="900" y2="40" stroke="#5f6a3c" stroke-width="0.9" opacity="0.7"/><line x1="790" y1="77" x2="860" y2="77" stroke="#5f6a3c" stroke-width="1.2" opacity="0.9"/><line x1="640" y1="77" x2="700" y2="77" stroke="#3a8449" stroke-width="0.5" opacity="0.6"/><line x1="792" y1="0" x2="792" y2="80" stroke="#5f6a3c" stroke-width="1.0" opacity="0.8"/><line x1="838" y1="40" x2="838" y2="130" stroke="#3a8449" stroke-width="0.7" opacity="0.7"/><line x1="862" y1="80" x2="862" y2="372" stroke="#5f6a3c" stroke-width="0.9" opacity="0.8"/><line x1="891" y1="0" x2="891" y2="372" stroke="#3a8449" stroke-width="0.8" opacity="0.8"/><line x1="873" y1="0" x2="873" y2="40" stroke="#3a8449" stroke-width="0.6" opacity="0.7"/><line x1="860" y1="10" x2="900" y2="10" stroke="#3a8449" stroke-width="0.5" opacity="0.6"/><line x1="860" y1="25" x2="900" y2="25" stroke="#3a8449" stroke-width="0.5" opacity="0.6"/><rect x="876" y="10" width="12" height="28" fill="none" stroke="#3a8449" stroke-width="0.5" opacity="0.6"/><line x1="770" y1="130" x2="900" y2="130" stroke="#3a8449" stroke-width="0.5" opacity="0.6"/><line x1="700" y1="145" x2="900" y2="145" stroke="#1f5a44" stroke-width="0.6" opacity="0.7"/><line x1="706" y1="168" x2="890" y2="168" stroke="#479a52" stroke-width="1.0" opacity="0.75"/><line x1="706" y1="197" x2="900" y2="197" stroke="#3a8449" stroke-width="0.6" opacity="0.7"/><line x1="640" y1="220" x2="900" y2="220" stroke="#5f6a3c" stroke-width="0.9" opacity="0.75"/><line x1="708" y1="167" x2="708" y2="372" stroke="#3a8449" stroke-width="0.9" opacity="0.8"/><line x1="797" y1="168" x2="797" y2="293" stroke="#3a8449" stroke-width="0.7" opacity="0.7"/><rect x="675" y="175" width="35" height="20" fill="none" stroke="#3a8449" stroke-width="0.5" opacity="0.6"/><line x1="675" y1="195" x2="695" y2="175" stroke="#3a8449" stroke-width="0.4" opacity="0.5"/><line x1="677" y1="195" x2="697" y2="175" stroke="#3a8449" stroke-width="0.4" opacity="0.5"/><line x1="679" y1="195" x2="699" y2="175" stroke="#3a8449" stroke-width="0.4" opacity="0.5"/><line x1="681" y1="195" x2="701" y2="175" stroke="#3a8449" stroke-width="0.4" opacity="0.5"/><line x1="683" y1="195" x2="703" y2="175" stroke="#3a8449" stroke-width="0.4" opacity="0.5"/><line x1="685" y1="195" x2="705" y2="175" stroke="#3a8449" stroke-width="0.4" opacity="0.5"/><line x1="687" y1="195" x2="707" y2="175" stroke="#3a8449" stroke-width="0.4" opacity="0.5"/><line x1="689" y1="195" x2="709" y2="175" stroke="#3a8449" stroke-width="0.4" opacity="0.5"/><line x1="691" y1="195" x2="710" y2="176" stroke="#3a8449" stroke-width="0.4" opacity="0.5"/><line x1="693" y1="195" x2="710" y2="178" stroke="#3a8449" stroke-width="0.4" opacity="0.5"/><line x1="695" y1="195" x2="710" y2="180" stroke="#3a8449" stroke-width="0.4" opacity="0.5"/><line x1="697" y1="195" x2="710" y2="182" stroke="#3a8449" stroke-width="0.4" opacity="0.5"/><line x1="699" y1="195" x2="710" y2="184" stroke="#3a8449" stroke-width="0.4" opacity="0.5"/><line x1="701" y1="195" x2="710" y2="186" stroke="#3a8449" stroke-width="0.4" opacity="0.5"/><line x1="703" y1="195" x2="710" y2="188" stroke="#3a8449" stroke-width="0.4" opacity="0.5"/><line x1="705" y1="195" x2="710" y2="190" stroke="#3a8449" stroke-width="0.4" opacity="0.5"/><line x1="707" y1="195" x2="710" y2="192" stroke="#3a8449" stroke-width="0.4" opacity="0.5"/><line x1="709" y1="195" x2="710" y2="194" stroke="#3a8449" stroke-width="0.4" opacity="0.5"/><path d="M672 152 L677 145 L682 152Z" fill="#5f6a3c" stroke="#5f6a3c" stroke-width="0.6" opacity="0.8"/><path d="M672 244 L677 237 L682 244Z" fill="#5f6a3c" stroke="#5f6a3c" stroke-width="0.6" opacity="0.8"/><path d="M730 150 Q735 205 780 208 Q805 205 795 172 Q790 160 780 165" fill="none" stroke="#3a8449" stroke-width="0.9" opacity="0.7"/><path d="M760 180 Q770 160 780 190" fill="none" stroke="#3a8449" stroke-width="0.7" opacity="0.6"/><circle cx="767" cy="178" r="5" fill="none" stroke="#3a8449" stroke-width="0.7" opacity="0.6"/><path d="M700 260 Q760 300 790 260 Q820 230 860 250" fill="none" stroke="#1f5a44" stroke-width="0.7" opacity="0.6"/><circle cx="790" cy="242" r="12" fill="none" stroke="#3a8449" stroke-width="0.7" opacity="0.7"/><circle cx="790" cy="242" r="7" fill="none" stroke="#3a8449" stroke-width="0.7" opacity="0.7"/><circle cx="790" cy="242" r="3" fill="none" stroke="#3a8449" stroke-width="0.7" opacity="0.7"/><rect x="801" y="172" width="8" height="12" fill="none" stroke="#3a8449" stroke-width="0.8" opacity="0.75"/><rect x="801" y="188" width="8" height="12" fill="none" stroke="#3a8449" stroke-width="0.8" opacity="0.75"/><rect x="801" y="204" width="8" height="12" fill="none" stroke="#3a8449" stroke-width="0.8" opacity="0.75"/><rect x="801" y="220" width="8" height="12" fill="none" stroke="#3a8449" stroke-width="0.8" opacity="0.75"/><rect x="815" y="172" width="5" height="7" fill="none" stroke="#3a8449" stroke-width="0.6" opacity="0.8"/><rect x="828" y="172" width="5" height="7" fill="none" stroke="#3a8449" stroke-width="0.6" opacity="0.8"/><rect x="840" y="172" width="5" height="7" fill="none" stroke="#3a8449" stroke-width="0.6" opacity="0.8"/><rect x="815" y="205" width="5" height="7" fill="none" stroke="#3a8449" stroke-width="0.6" opacity="0.8"/><rect x="828" y="205" width="5" height="7" fill="none" stroke="#3a8449" stroke-width="0.6" opacity="0.8"/><rect x="860" y="176" width="5" height="7" fill="none" stroke="#3a8449" stroke-width="0.6" opacity="0.8"/><rect x="870" y="176" width="5" height="7" fill="none" stroke="#3a8449" stroke-width="0.6" opacity="0.8"/><line x1="845" y1="168" x2="845" y2="215" stroke="#3a8449" stroke-width="0.7" opacity="0.7"/><line x1="711" y1="227" x2="900" y2="227" stroke="#1f5a44" stroke-width="0.6" opacity="0.6"/><line x1="640" y1="293" x2="900" y2="293" stroke="#3a8449" stroke-width="0.8" opacity="0.75"/><line x1="666" y1="290" x2="666" y2="342" stroke="#3a8449" stroke-width="0.6" opacity="0.6"/><line x1="640" y1="340" x2="900" y2="340" stroke="#3a8449" stroke-width="0.5" opacity="0.5"/><line x1="640" y1="365" x2="900" y2="365" stroke="#5f6a3c" stroke-width="2.0" opacity="0.85"/><path d="M645 362 L675 362 Q678 365 675 368 L645 368 Q642 365 645 362Z" fill="none" stroke="#5f6a3c" stroke-width="0.8" opacity="0.9"/><line x1="790" y1="219" x2="790" y2="365" stroke="#5f6a3c" stroke-width="1.5" opacity="0.75"/><line x1="754" y1="140" x2="754" y2="372" stroke="#3a8449" stroke-width="0.7" opacity="0.7"/><line x1="861" y1="168" x2="861" y2="365" stroke="#5f6a3c" stroke-width="1.2" opacity="0.7"/><line x1="717" y1="290" x2="717" y2="372" stroke="#5f6a3c" stroke-width="1.0" opacity="0.75"/><line x1="705" y1="263" x2="900" y2="263" stroke="#3a8449" stroke-width="0.8" opacity="0.7"/><rect x="735" y="275" width="5" height="5" fill="none" stroke="#3a8449" stroke-width="0.6" opacity="0.6"/><rect x="748" y="300" width="5" height="5" fill="none" stroke="#3a8449" stroke-width="0.6" opacity="0.6"/><rect x="730" y="320" width="5" height="5" fill="none" stroke="#3a8449" stroke-width="0.6" opacity="0.6"/><rect x="748" y="330" width="5" height="5" fill="none" stroke="#3a8449" stroke-width="0.6" opacity="0.6"/><rect x="800" y="285" width="5" height="5" fill="none" stroke="#3a8449" stroke-width="0.6" opacity="0.6"/><rect x="820" y="280" width="5" height="5" fill="none" stroke="#3a8449" stroke-width="0.6" opacity="0.6"/><rect x="840" y="300" width="5" height="5" fill="none" stroke="#3a8449" stroke-width="0.6" opacity="0.6"/><rect x="810" y="330" width="5" height="5" fill="none" stroke="#3a8449" stroke-width="0.6" opacity="0.6"/><rect x="830" y="340" width="5" height="5" fill="none" stroke="#3a8449" stroke-width="0.6" opacity="0.6"/><rect x="880" y="300" width="5" height="5" fill="none" stroke="#3a8449" stroke-width="0.6" opacity="0.6"/><rect x="872" y="320" width="5" height="5" fill="none" stroke="#3a8449" stroke-width="0.6" opacity="0.6"/><rect x="760" y="310" width="5" height="5" fill="none" stroke="#3a8449" stroke-width="0.6" opacity="0.6"/><rect x="775" y="330" width="5" height="5" fill="none" stroke="#3a8449" stroke-width="0.6" opacity="0.6"/><rect x="700" y="310" width="5" height="5" fill="none" stroke="#3a8449" stroke-width="0.6" opacity="0.6"/><circle cx="707" cy="293" r="3" fill="none" stroke="#3a8449" stroke-width="0.6" opacity="0.6"/><circle cx="755" cy="296" r="3" fill="none" stroke="#3a8449" stroke-width="0.6" opacity="0.6"/><rect x="735" y="240" width="4" height="4" fill="none" stroke="#3a8449" stroke-width="0.6" opacity="0.65"/><rect x="748" y="240" width="4" height="4" fill="none" stroke="#3a8449" stroke-width="0.6" opacity="0.65"/><rect x="735" y="252" width="4" height="4" fill="none" stroke="#3a8449" stroke-width="0.6" opacity="0.65"/><rect x="748" y="252" width="4" height="4" fill="none" stroke="#3a8449" stroke-width="0.6" opacity="0.65"/><rect x="735" y="310" width="4" height="4" fill="none" stroke="#3a8449" stroke-width="0.6" opacity="0.65"/><rect x="748" y="310" width="4" height="4" fill="none" stroke="#3a8449" stroke-width="0.6" opacity="0.65"/><rect x="735" y="322" width="4" height="4" fill="none" stroke="#3a8449" stroke-width="0.6" opacity="0.65"/><rect x="748" y="322" width="4" height="4" fill="none" stroke="#3a8449" stroke-width="0.6" opacity="0.65"/><rect x="765" y="325" width="4" height="4" fill="none" stroke="#3a8449" stroke-width="0.6" opacity="0.65"/><rect x="778" y="325" width="4" height="4" fill="none" stroke="#3a8449" stroke-width="0.6" opacity="0.65"/><rect x="808" y="300" width="4" height="4" fill="none" stroke="#3a8449" stroke-width="0.6" opacity="0.65"/><rect x="808" y="315" width="4" height="4" fill="none" stroke="#3a8449" stroke-width="0.6" opacity="0.65"/><rect x="808" y="330" width="4" height="4" fill="none" stroke="#3a8449" stroke-width="0.6" opacity="0.65"/><rect x="845" y="310" width="4" height="4" fill="none" stroke="#3a8449" stroke-width="0.6" opacity="0.65"/><rect x="830" y="340" width="4" height="4" fill="none" stroke="#3a8449" stroke-width="0.6" opacity="0.65"/><rect x="848" y="340" width="4" height="4" fill="none" stroke="#3a8449" stroke-width="0.6" opacity="0.65"/><rect x="875" y="282" width="4" height="4" fill="none" stroke="#3a8449" stroke-width="0.6" opacity="0.65"/><rect x="885" y="300" width="4" height="4" fill="none" stroke="#3a8449" stroke-width="0.6" opacity="0.65"/><rect x="740" y="275" width="4" height="4" fill="none" stroke="#3a8449" stroke-width="0.6" opacity="0.65"/><rect x="770" y="282" width="4" height="4" fill="none" stroke="#3a8449" stroke-width="0.6" opacity="0.65"/><path d="M655 380 Q700 430 760 450 Q830 475 900 480" fill="none" stroke="#4a5a3a" stroke-width="0.6" opacity="0.5"/><path d="M640 395 Q720 470 900 488" fill="none" stroke="#3a5040" stroke-width="0.5" opacity="0.4"/><line x1="640" y1="454" x2="900" y2="454" stroke="#2f5040" stroke-width="0.5" opacity="0.5"/><line x1="718" y1="372" x2="718" y2="489" stroke="#2f5040" stroke-width="0.5" opacity="0.5"/><rect x="717" y="420" width="60" height="22" fill="none" stroke="#3c5040" stroke-width="0.5" opacity="0.5"/><line x1="680" y1="384" x2="740" y2="384" stroke="#3c5040" stroke-width="0.5" opacity="0.5"/><line x1="780" y1="384" x2="900" y2="384" stroke="#3c5040" stroke-width="0.5" opacity="0.5"/><path d="M892 395 L899 388 L899 402Z" fill="none" stroke="#5f6a3c" stroke-width="0.6" opacity="0.7"/><circle cx="618.7" cy="453.8" r="6" fill="none" stroke="#4d5a38" stroke-width="0.5" opacity="0.7"/><circle cx="618.7" cy="466" r="6" fill="none" stroke="#4d5a38" stroke-width="0.5" opacity="0.7"/><circle cx="618.7" cy="440" r="6" fill="none" stroke="#4d5a38" stroke-width="0.5" opacity="0.6"/><line x1="646.5" y1="430" x2="646.5" y2="489" stroke="#4d5a38" stroke-width="0.5" opacity="0.6"/><line x1="628" y1="436.7" x2="665" y2="436.7" stroke="#4d5a38" stroke-width="0.5" opacity="0.6"/><line x1="670" y1="436.7" x2="676" y2="436.7" stroke="#4d5a38" stroke-width="0.5" opacity="0.6"/><line x1="679" y1="436.7" x2="700" y2="436.7" stroke="#4d5a38" stroke-width="0.5" opacity="0.6"/><line x1="628" y1="454.4" x2="665" y2="454.4" stroke="#4d5a38" stroke-width="0.5" opacity="0.6"/><line x1="670" y1="454.4" x2="676" y2="454.4" stroke="#4d5a38" stroke-width="0.5" opacity="0.6"/><line x1="679" y1="454.4" x2="700" y2="454.4" stroke="#4d5a38" stroke-width="0.5" opacity="0.6"/><line x1="628" y1="465.7" x2="665" y2="465.7" stroke="#4d5a38" stroke-width="0.5" opacity="0.6"/><line x1="670" y1="465.7" x2="676" y2="465.7" stroke="#4d5a38" stroke-width="0.5" opacity="0.6"/><line x1="679" y1="465.7" x2="700" y2="465.7" stroke="#4d5a38" stroke-width="0.5" opacity="0.6"/><line x1="632" y1="440" x2="632" y2="466" stroke="#4d5a38" stroke-width="0.5" opacity="0.6"/><line x1="638.5" y1="440" x2="638.5" y2="466" stroke="#4d5a38" stroke-width="0.5" opacity="0.6"/><line x1="620" y1="0" x2="620" y2="96" stroke="#1f5a44" stroke-width="0.5" opacity="0.5"/><line x1="631" y1="0" x2="631" y2="96" stroke="#1f5a44" stroke-width="0.5" opacity="0.5"/><line x1="638" y1="0" x2="638" y2="96" stroke="#1f5a44" stroke-width="0.5" opacity="0.5"/><circle cx="620" cy="6" r="3" fill="none" stroke="#1f5a44" stroke-width="0.6" opacity="0.7"/><circle cx="620" cy="77" r="3" fill="none" stroke="#1f5a44" stroke-width="0.6" opacity="0.7"/><line x1="640" y1="12" x2="652" y2="24" stroke="#1f5a44" stroke-width="0.5" opacity="0.6"/><line x1="640" y1="15" x2="652" y2="27" stroke="#1f5a44" stroke-width="0.5" opacity="0.6"/><line x1="640" y1="18" x2="652" y2="30" stroke="#1f5a44" stroke-width="0.5" opacity="0.6"/><line x1="640" y1="21" x2="652" y2="33" stroke="#1f5a44" stroke-width="0.5" opacity="0.6"/><line x1="640" y1="24" x2="652" y2="36" stroke="#1f5a44" stroke-width="0.5" opacity="0.6"/><line x1="640" y1="27" x2="652" y2="39" stroke="#1f5a44" stroke-width="0.5" opacity="0.6"/><line x1="640" y1="30" x2="652" y2="42" stroke="#1f5a44" stroke-width="0.5" opacity="0.6"/></svg>
<svg class="abs" style="left:14px;top:5px" width="25" height="29" viewBox="0 0 25 29">
<path d="M1 5 L23.5 5 L19.5 26.5 Q12.3 29 5 26.5 Z" fill="#b6b9ba"/>
<path d="M3 6 L6 26" stroke="#c4c7c8" stroke-width="1.2" opacity="0.7"/>
<ellipse cx="12.3" cy="4.6" rx="11.3" ry="3.7" fill="#c9cbcc"/>
<ellipse cx="12.3" cy="5" rx="9.8" ry="2.6" fill="#d3d5d6"/>
<ellipse cx="12.3" cy="26.3" rx="7.2" ry="1.9" fill="#d6d8d9"/>
<g fill="none" stroke="#2e90dc" stroke-width="2">
<path d="M9.2 14.2 A4 4 0 0 1 15 13.6"/><path d="M16.2 15.8 A4 4 0 0 1 13.6 20.8"/><path d="M10.8 20.8 A4 4 0 0 1 8.2 16.4"/>
</g>
<circle cx="12.3" cy="17" r="1.3" fill="#c8cacb"/>
</svg>
<div class="t" style="left:16.00px;top:36.27px;font-size:7px;color:#e8e8e8;font-weight:normal;transform:scaleX(0.88);text-shadow:0 0 1px #000">Cestino</div>
<svg class="abs" style="left:66px;top:9.5px" width="25.5" height="21" viewBox="0 0 25.5 21">
<path d="M0.4 2 Q0.4 0.4 2 0.4 L11.5 0.4 L13.5 2.6 L23.5 2.6 Q25 2.6 25 4 L25 19.2 Q25 20.6 23.5 20.6 L2 20.6 Q0.4 20.6 0.4 19.2Z" fill="#f7dc8a"/>
<path d="M0.4 2 Q0.4 0.4 2 0.4 L11.5 0.4 L13.5 2.6 L12 4.8 L0.4 4.8Z" fill="#e9c25c"/>
<path d="M0.4 4.8 L12 4.8 L13.5 2.6 L23.5 2.6 Q25 2.6 25 4 L25 19.2 Q25 20.6 23.5 20.6 L2 20.6 Q0.4 20.6 0.4 19.2Z" fill="#fae39a"/>
<path d="M9.3 15.2 L9.3 11.6 L12.7 8.3 L16.1 11.6 L16.1 15.2 Z" fill="none" stroke="#4a3e25" stroke-width="0.75"/>
<rect x="11.9" y="12.6" width="1.6" height="2.6" fill="#4a3e25"/>
<path d="M15 9.2 L15 10.6" stroke="#4a3e25" stroke-width="0.7"/>
</svg>
<div class="t" style="left:70.00px;top:36.27px;font-size:7px;color:#e8e8e8;font-weight:normal;transform:scaleX(0.9);text-shadow:0 0 1px #000">Home</div>
<div class="abs" style="left:210px;top:96px;width:431px;height:341.8px;background:transparent;box-shadow:0 4px 16px 3px rgba(0,0,0,.55);border-radius:2px 2px 0 0"></div>
<div class="abs" style="left:210px;top:102px;width:431px;height:335.8px;background:#eff0f1;"></div>
<div class="abs" style="left:210px;top:96px;width:431px;height:13px;background:#33373c;border-radius:2px 2px 0 0"></div>
<svg class="abs" style="left:212.7px;top:98.3px" width="9" height="9" viewBox="0 0 9 9"><circle cx="4.3" cy="4.4" r="4.1" fill="#45b05a"/><circle cx="4.3" cy="4.4" r="3" fill="#5cc06d"/><path d="M1.6 4.6 Q2.4 2.8 4.6 3.2 L6.6 3.8 Q7.2 4.6 6.4 5.2 L5.2 5.2 L5.2 6.4 L4.4 6.4 L4.2 5.4 L3 5.4 L2.8 6.4 L2 6.4Z" fill="#e6f4e8"/></svg>
<svg class="abs" style="left:225px;top:99px" width="7" height="7" viewBox="0 0 7 7"><path d="M1 6 L3 4 M2.5 2.5 L4.5 4.5 M3 3.5 L5 1.5 L6 2.5 L4 4.5" stroke="#e0e0e0" stroke-width="1.2" fill="none"/></svg>
<div class="t" style="left:352.90px;top:99.48px;font-size:6.4px;color:#e3e5e7;font-weight:normal;transform:scaleX(0.9930814676616914);">Centro di controllo di YaST @ localhost.localdomain</div>
<svg class="abs" style="left:607px;top:99px" width="34" height="8" viewBox="0 0 34 8">
<path d="M2.3 2 L5.2 5.2 L8.1 2" stroke="#b8babc" stroke-width="0.8" fill="none"/>
<path d="M13.8 5.2 L16.5 2 L19.2 5.2" stroke="#b8babc" stroke-width="0.8" fill="none"/>
</svg>
<svg class="abs" style="left:629px;top:97px" width="11" height="11" viewBox="0 0 11 11"><circle cx="5.6" cy="5.6" r="4.3" fill="#eceeef"/><path d="M3.8 3.8 L7.4 7.4 M7.4 3.8 L3.8 7.4" stroke="#4a4f54" stroke-width="0.7"/></svg>
<svg class="abs" style="left:301px;top:113px" width="6" height="6" viewBox="0 0 6 6"><path d="M3 0.8 L5.2 3 L3 5.2 L0.8 3 Z" fill="none" stroke="#777" stroke-width="0.8"/></svg>
<div class="t" style="left:214.30px;top:131.28px;font-size:6.4px;color:#31363b;font-weight:normal;transform:scaleX(0.9182820855614972);">Cerca</div>
<div class="abs" style="left:234px;top:127px;width:74px;height:13.5px;background:#fcfcfc;border:1px solid #cfd1d3;border-radius:2px"></div>
<div class="abs" style="left:215px;top:145px;width:92.5px;height:277.5px;background:#fcfcfc;border:1px solid #d3d5d7"></div>
<div class="abs" style="left:216px;top:146px;width:91px;height:18px;background:#c3e0f4;"></div>
<div class="t" style="left:234.50px;top:152.07px;font-size:6.3px;color:#31363b;font-weight:normal;">Software</div>
<div class="t" style="left:234.50px;top:170.74px;font-size:6.3px;color:#31363b;font-weight:normal;">Hardware</div>
<div class="t" style="left:234.50px;top:189.41px;font-size:6.3px;color:#31363b;font-weight:normal;">Sistema</div>
<div class="t" style="left:234.50px;top:208.08px;font-size:6.3px;color:#31363b;font-weight:normal;">Servizi di rete</div>
<div class="t" style="left:234.50px;top:226.75px;font-size:6.3px;color:#31363b;font-weight:normal;">Sicurezza e utenti</div>
<div class="t" style="left:234.50px;top:245.42px;font-size:6.3px;color:#31363b;font-weight:normal;">Virtualizzazione</div>
<div class="t" style="left:234.50px;top:264.09px;font-size:6.3px;color:#31363b;font-weight:normal;">Supporto</div>
<div class="t" style="left:234.50px;top:282.76px;font-size:6.3px;color:#31363b;font-weight:normal;">Varie</div>
<div class="abs" style="left:310.5px;top:110px;width:1px;height:316px;background:#dadcde;"></div>
<div class="abs" style="left:210px;top:425.8px;width:101px;height:1px;background:#dadcde;"></div>
<div class="abs" style="left:315px;top:113px;width:323px;height:311px;background:#fcfcfc;border:1px solid #9ccff0"></div>
<div class="abs" style="left:316px;top:114px;width:312px;height:9px;background:#3daee9;"></div>
<div class="abs" style="left:316px;top:123px;width:141px;height:1px;background:#86c9ee;"></div>
<div class="t" style="left:317.50px;top:115.58px;font-size:6.4px;color:#ffffff;font-weight:bold;transform:scaleX(0.94);-webkit-text-stroke:0;">Software</div>
<div class="abs" style="left:316px;top:124px;width:141px;height:24.5px;background:#3daee9;border-radius:3px"></div>
<div class="abs" style="left:627px;top:114px;width:10px;height:309px;background:#fafafa;border-left:1px solid #eceeef"></div>
<div class="abs" style="left:631px;top:117px;width:3px;height:128px;background:#6cc0ec;border-radius:1.5px"></div>
<div class="t" style="left:317.50px;top:200.38px;font-size:6.4px;color:#232627;font-weight:bold;transform:scaleX(0.93);-webkit-text-stroke:0;">Hardware</div>
<div class="abs" style="left:316px;top:207px;width:307px;height:1px;background:#aaacae;"></div>
<div class="t" style="left:317.50px;top:284.88px;font-size:6.4px;color:#232627;font-weight:bold;transform:scaleX(0.93);-webkit-text-stroke:0;">Sistema</div>
<div class="abs" style="left:316px;top:292px;width:307px;height:1px;background:#aaacae;"></div>
<div class="t" style="left:317.50px;top:394.58px;font-size:6.4px;color:#232627;font-weight:bold;transform:scaleX(0.93);-webkit-text-stroke:0;">Servizi di rete</div>
<div class="abs" style="left:316px;top:402px;width:307px;height:1px;background:#aaacae;"></div>
<div class="t" style="left:332.80px;top:129.90px;font-size:6.5px;color:#ffffff;font-weight:normal;">Prodotti aggiuntivi</div>
<div class="t" style="left:473.40px;top:129.90px;font-size:6.5px;color:#31363b;font-weight:normal;">Verifica del supporto</div>
<div class="t" style="left:332.80px;top:154.60px;font-size:6.5px;color:#31363b;font-weight:normal;">Aggiornamento online</div>
<div class="t" style="left:473.40px;top:154.60px;font-size:6.5px;color:#31363b;font-weight:normal;">Gestione pacchetti</div>
<div class="t" style="left:332.80px;top:179.20px;font-size:6.5px;color:#31363b;font-weight:normal;">Repository dei programmi</div>
<div class="t" style="left:332.80px;top:214.20px;font-size:6.5px;color:#31363b;font-weight:normal;">Informazioni hardware</div>
<div class="t" style="left:473.40px;top:214.20px;font-size:6.5px;color:#31363b;font-weight:normal;">Mappatura della tastiera di sistema</div>
<div class="t" style="left:332.80px;top:239.10px;font-size:6.5px;color:#31363b;font-weight:normal;">Stampante</div>
<div class="t" style="left:473.40px;top:239.10px;font-size:6.5px;color:#31363b;font-weight:normal;">Scanner</div>
<div class="t" style="left:332.80px;top:264.00px;font-size:6.5px;color:#31363b;font-weight:normal;">Audio</div>
<div class="t" style="left:332.80px;top:298.80px;font-size:6.5px;color:#31363b;font-weight:normal;">Boot loader</div>
<div class="t" style="left:473.40px;top:298.80px;font-size:6.5px;color:#31363b;font-weight:normal;">Data e ora</div>
<div class="t" style="left:332.80px;top:323.70px;font-size:6.5px;color:#31363b;font-weight:normal;">Impostazioni kernel</div>
<div class="t" style="left:473.40px;top:323.70px;font-size:6.5px;color:#31363b;font-weight:normal;">Lingua</div>
<div class="t" style="left:332.80px;top:348.60px;font-size:6.5px;color:#31363b;font-weight:normal;">Impostazioni di rete</div>
<div class="t" style="left:473.40px;top:348.60px;font-size:6.5px;color:#31363b;font-weight:normal;">Partizionatore</div>
<div class="t" style="left:332.80px;top:373.50px;font-size:6.5px;color:#31363b;font-weight:normal;">Gestore dei servizi</div>
<div class="t" style="left:473.40px;top:373.50px;font-size:6.5px;color:#31363b;font-weight:normal;">Sysconfig Editor</div>
<div class="t" style="left:332.80px;top:408.50px;font-size:6.5px;color:#31363b;font-weight:normal;">Nomi host</div>
<div class="t" style="left:473.40px;top:408.50px;font-size:6.5px;color:#31363b;font-weight:normal;">LDAP e Kerberos</div>
<div class="t" style="left:318.00px;top:141.35px;font-size:6.2px;color:#e8f4fb;font-weight:normal;transform:scaleX(0.91);">Installa o rimuovi prodotti aggiuntivi</div>
<svg class="abs" style="left:217px;top:148px" width="14" height="13" viewBox="0 0 16 16" preserveAspectRatio="none"><path d="M0.2 3.6 L7 3.6 L7 16 L0.2 16 Z" fill="#eceeef"/>
<path d="M7 3.6 L15.8 3.6 L15.8 16 L7 16 Z" fill="#74bf3f"/>
<path d="M1 0.3 L15 0.3 L15.9 3.9 L0.1 3.9Z" fill="#d9b383"/>
<rect x="6.5" y="0.3" width="1.4" height="3.6" fill="#eadcae"/>
<rect x="0.9" y="12.4" width="2.8" height="3" fill="#5a5652"/></svg>
<svg class="abs" style="left:217.5px;top:167px" width="13" height="13" viewBox="0 0 16 16" preserveAspectRatio="none"><rect x="0.3" y="0.3" width="15.4" height="15.4" rx="1" fill="#4e9a3c"/>
<rect x="0.8" y="0.8" width="14.4" height="14.4" fill="none" stroke="#6cc04f" stroke-width="0.8"/>
<rect x="2.4" y="2.4" width="11.2" height="11.2" fill="#b9bcba"/>
<path d="M2.4 2.4 L13.6 2.4 L2.4 13.6Z" fill="#c9cbc9"/>
<path d="M3.5 12.5 L12.5 3.5" stroke="#8a8d8b" stroke-width="0.5"/>
<path d="M6.5 9.5 L9.5 6.5 M6 7 L9 10" stroke="#3a3d3b" stroke-width="1.1"/>
<circle cx="12" cy="4" r="0.6" fill="#333"/></svg>
<svg class="abs" style="left:217.5px;top:185.8px" width="13" height="12.7" viewBox="0 0 16 16" preserveAspectRatio="none"><rect x="0.5" y="0.5" width="15" height="15" rx="1.5" fill="#2a2e32"/>
<rect x="2.5" y="5" width="11" height="1.4" fill="#3daee9"/><rect x="11" y="4.3" width="2.5" height="2.8" fill="#e9ecee"/>
<rect x="2.5" y="9.5" width="11" height="1.4" fill="#4d5257"/><rect x="2.5" y="9.5" width="3" height="1.4" fill="#3daee9"/><rect x="5" y="8.8" width="2.5" height="2.8" fill="#e9ecee"/></svg>
<svg class="abs" style="left:217.3px;top:204px" width="14" height="13.5" viewBox="0 0 16 16" preserveAspectRatio="none"><circle cx="8" cy="8" r="7.6" fill="#1f88db"/>
<path d="M1.2 5.5 Q2.5 1.8 6.5 0.6 Q8 2.5 6.5 4.5 Q4.5 6.5 2.8 7.5 Q1.4 7 1.2 5.5Z" fill="#4fc27a"/>
<path d="M9.5 0.7 Q14 1.8 15.3 6 Q13 6.8 11.5 5.2 Q10 3.5 9.5 0.7Z" fill="#4fc27a"/>
<path d="M4.5 9 Q8.5 8 11 10.5 Q11.2 13.5 8.5 15.4 Q6 13.5 4.5 9Z" fill="#4fc27a"/></svg>
<svg class="abs" style="left:217px;top:223px" width="14" height="13" viewBox="0 0 16 16" preserveAspectRatio="none"><path d="M8 0.5 L14 2.5 L14 8 Q14 13 8 15.5 Q2 13 2 8 L2 2.5 Z" fill="#2196e8"/>
<rect x="5.3" y="7.2" width="5.4" height="4.3" fill="#d5ecfb"/><path d="M6.2 7.2 L6.2 5.8 Q8 3.8 9.8 5.8 L9.8 7.2" stroke="#d5ecfb" stroke-width="1" fill="none"/></svg>
<svg class="abs" style="left:216.8px;top:241.8px" width="15" height="12.2" viewBox="0 0 16 16" preserveAspectRatio="none"><rect x="0.3" y="1" width="15.4" height="14" fill="#fbfbfb" stroke="#c8c8c8" stroke-width="0.5"/>
<rect x="0.3" y="1" width="15.4" height="1.8" fill="#31414f"/>
<path d="M3 7 L5 12 L7 7" stroke="#e0303a" stroke-width="1.2" fill="none"/>
<path d="M7 12 L8.5 7 L10 10 L11.5 7 L13 12" stroke="#444" stroke-width="1" fill="none"/></svg>
<svg class="abs" style="left:217.6px;top:260.5px" width="13" height="13.5" viewBox="0 0 16 16" preserveAspectRatio="none"><circle cx="8" cy="8" r="5.6" fill="none" stroke="#d5dce0" stroke-width="4"/>
<circle cx="8" cy="8" r="5.6" fill="none" stroke="#d8202f" stroke-width="4" stroke-dasharray="5.2 3.6" stroke-dashoffset="-1.8"/>
<circle cx="8" cy="8" r="3.4" fill="#fff"/></svg>
<svg class="abs" style="left:217.6px;top:279.7px" width="13" height="12.5" viewBox="0 0 16 16" preserveAspectRatio="none"><circle cx="8" cy="8" r="7.6" fill="#dcdee0"/><circle cx="8" cy="8.3" r="7.2" fill="#d2d4d6"/>
<rect x="4.3" y="7.2" width="1.8" height="1.8" fill="#2a2e32"/><rect x="7.1" y="7.2" width="1.8" height="1.8" fill="#2a2e32"/><rect x="9.9" y="7.2" width="1.8" height="1.8" fill="#2a2e32"/></svg>
<svg class="abs" style="left:316.7px;top:124.7px" width="15.4" height="13.4" viewBox="0 0 16 16" preserveAspectRatio="none"><path d="M0.5 1.5 L8 1.5 L8 15 L0.5 15Z" fill="#1c9be6"/>
<path d="M1.2 2.2 L6.5 2.2 L6.5 14 L1.2 14Z" fill="#27b0f4"/>
<path d="M3 4 L3 13" stroke="#5cc4f8" stroke-width="0.5"/>
<path d="M8.8 0.8 L15.5 0.8 L15.5 15.2 L8.8 15.2 L8.8 11 L10.5 8 L8.8 5Z" fill="#f3f5f6"/>
<path d="M8.8 5 L10.5 8 L8.8 11" stroke="#5a6064" stroke-width="0.7" fill="none"/>
<rect x="13.2" y="2" width="1.3" height="2.4" fill="#888"/>
<path d="M0.5 15.2 L15.5 15.2" stroke="#3aa860" stroke-width="0.6"/></svg>
<svg class="abs" style="left:458.3px;top:125.8px" width="14.6" height="14.6" viewBox="0 0 16 16" preserveAspectRatio="none"><circle cx="7.5" cy="7.5" r="7.3" fill="#d2d4d6"/><circle cx="7.5" cy="7.5" r="2.9" fill="#5e6368"/><circle cx="7.5" cy="7.5" r="1.3" fill="#d2d4d6"/>
<circle cx="12.5" cy="12.5" r="3" fill="#2fb85e" stroke="#fff" stroke-width="0.6"/><path d="M11 12.5 L12.2 13.7 L14 11.6" stroke="#fff" stroke-width="0.8" fill="none"/></svg>
<svg class="abs" style="left:317.8px;top:150.2px" width="13.4" height="13.5" viewBox="0 0 16 16" preserveAspectRatio="none"><path d="M0.2 3.6 L7 3.6 L7 16 L0.2 16 Z" fill="#eceeef"/>
<path d="M7 3.6 L15.8 3.6 L15.8 16 L7 16 Z" fill="#74bf3f"/>
<path d="M1 0.3 L15 0.3 L15.9 3.9 L0.1 3.9Z" fill="#d9b383"/>
<rect x="6.5" y="0.3" width="1.4" height="3.6" fill="#eadcae"/>
<rect x="0.9" y="12.4" width="2.8" height="3" fill="#5a5652"/><path d="M9.8 11.5 A2.4 2.4 0 1 1 13.2 9.2" stroke="#c9eab8" stroke-width="0.9" fill="none"/></svg>
<svg class="abs" style="left:458.5px;top:150px" width="13" height="13.7" viewBox="0 0 16 16" preserveAspectRatio="none"><path d="M0.2 3.6 L7 3.6 L7 16 L0.2 16 Z" fill="#eceeef"/>
<path d="M7 3.6 L15.8 3.6 L15.8 16 L7 16 Z" fill="#74bf3f"/>
<path d="M1 0.3 L15 0.3 L15.9 3.9 L0.1 3.9Z" fill="#d9b383"/>
<rect x="6.5" y="0.3" width="1.4" height="3.6" fill="#eadcae"/>
<rect x="0.9" y="12.4" width="2.8" height="3" fill="#5a5652"/><path d="M9.8 10 Q11.5 13 13.2 10" stroke="#d6f0c8" stroke-width="0.9" fill="none"/><circle cx="11.5" cy="8.5" r="0.9" fill="#d6f0c8"/></svg>
<svg class="abs" style="left:317.8px;top:175px" width="13.4" height="13.5" viewBox="0 0 16 16" preserveAspectRatio="none"><path d="M0.2 3.6 L7 3.6 L7 16 L0.2 16 Z" fill="#eceeef"/>
<path d="M7 3.6 L15.8 3.6 L15.8 16 L7 16 Z" fill="#74bf3f"/>
<path d="M1 0.3 L15 0.3 L15.9 3.9 L0.1 3.9Z" fill="#d9b383"/>
<rect x="6.5" y="0.3" width="1.4" height="3.6" fill="#eadcae"/>
<rect x="0.9" y="12.4" width="2.8" height="3" fill="#5a5652"/><circle cx="11.5" cy="11" r="2.6" stroke="#d6f0c8" stroke-width="0.9" fill="none"/></svg>
<svg class="abs" style="left:317.5px;top:209.9px" width="13.8" height="13.9" viewBox="0 0 16 16" preserveAspectRatio="none"><rect x="0.5" y="0.5" width="15" height="15" fill="#4f9b3a"/>
<rect x="2" y="1.8" width="12" height="11" fill="#2b8fe3"/>
<circle cx="8" cy="7.3" r="4" fill="none" stroke="#e8f4fd" stroke-width="0.8"/>
<rect x="7.5" y="6.3" width="1" height="3.3" fill="#fff"/><rect x="7.5" y="4.7" width="1" height="1" fill="#fff"/>
<rect x="2" y="13" width="12" height="1.6" fill="#31363b"/></svg>
<svg class="abs" style="left:457.6px;top:210px" width="15" height="15" viewBox="0 0 16 16" preserveAspectRatio="none"><rect x="0" y="3" width="16" height="8" fill="#d3d6d8"/>
<rect x="0" y="3" width="16" height="0.7" fill="#8fd6a6"/>
<g stroke="#30353a" stroke-dasharray="1.3 0.5" fill="none"><path d="M0.7 5.3 L15.5 5.3" stroke-width="1.5"/><path d="M0.7 7.6 L15.5 7.6" stroke-width="1.5"/><path d="M0.7 9.9 L15.5 9.9" stroke-width="1.4"/></g></svg>
<svg class="abs" style="left:318.2px;top:235.1px" width="12.2" height="12.5" viewBox="0 0 16 16" preserveAspectRatio="none"><rect x="3.5" y="0.5" width="9" height="5" fill="#f8f8f8" stroke="#c8c8c8" stroke-width="0.5"/>
<rect x="0.5" y="4.5" width="15" height="9" rx="1.2" fill="#b8bcbf"/>
<rect x="1.5" y="6" width="13" height="3.5" fill="#2a2e32"/>
<rect x="1" y="12.5" width="3.5" height="1.5" fill="#e33"/><rect x="4.5" y="12.5" width="3.5" height="1.5" fill="#3b3"/><rect x="8" y="12.5" width="3.5" height="1.5" fill="#36e"/><rect x="11.5" y="12.5" width="3.5" height="1.5" fill="#c4d"/></svg>
<svg class="abs" style="left:459px;top:235px" width="12.1" height="13.3" viewBox="0 0 16 16" preserveAspectRatio="none"><rect x="0.5" y="0.5" width="15" height="2.2" fill="#4d5257"/>
<rect x="1" y="2.7" width="14" height="10" fill="#1e7fd8"/>
<rect x="2.5" y="4" width="6" height="7.8" fill="#eef3f6"/>
<rect x="9.5" y="4" width="4" height="3.5" fill="#3c9ef0"/>
<rect x="1" y="12.7" width="14" height="1" fill="#cfd3d6"/>
<rect x="2" y="14.3" width="12" height="1.2" fill="#31363b"/></svg>
<svg class="abs" style="left:317.9px;top:260px" width="12.7" height="13" viewBox="0 0 16 16" preserveAspectRatio="none"><circle cx="8" cy="8" r="7.5" fill="#31363b"/><circle cx="8" cy="8.6" r="6.6" fill="#3e454b"/>
<rect x="7.4" y="1" width="1.2" height="3" fill="#3daee9"/></svg>
<svg class="abs" style="left:316.8px;top:294.8px" width="15.2" height="13.5" viewBox="0 0 16 16" preserveAspectRatio="none"><rect x="0" y="0.5" width="16" height="11.5" fill="#232629"/>
<rect x="1" y="1.5" width="1.2" height="9" fill="#5dbb45"/>
<path d="M3 3 L5 3 M3 5 L5.5 5 M3 7 L4.5 7" stroke="#8a9095" stroke-width="0.6"/>
<rect x="6.5" y="12" width="3" height="1.5" fill="#bbb"/><rect x="4.5" y="13.5" width="7" height="0.8" fill="#ddd"/></svg>
<svg class="abs" style="left:458.1px;top:295.7px" width="13.9" height="13.1" viewBox="0 0 16 16" preserveAspectRatio="none"><circle cx="8" cy="8" r="7.5" fill="#2a2e32"/><circle cx="8" cy="8" r="6.2" fill="#31363b"/>
<path d="M7.5 2.5 L7.5 8.5 L11 8.5" stroke="#3daee9" stroke-width="1" fill="none"/></svg>
<svg class="abs" style="left:318px;top:320px" width="13" height="13" viewBox="0 0 16 16" preserveAspectRatio="none"><ellipse cx="8" cy="9" rx="5" ry="6" fill="#1a1a1a"/>
<ellipse cx="8" cy="10.5" rx="3.3" ry="4" fill="#f2f2f2"/>
<circle cx="8" cy="4" r="2.8" fill="#1a1a1a"/>
<path d="M6.8 5 L9.2 5 L8 6.3Z" fill="#f5a623"/>
<path d="M1.5 14.5 Q2.5 11.5 4.5 12 L6 15 Z M14.5 14.5 Q13.5 11.5 11.5 12 L10 15Z" fill="#f5a623"/></svg>
<svg class="abs" style="left:457.7px;top:320px" width="14.3" height="14" viewBox="0 0 16 16" preserveAspectRatio="none"><path d="M0.5 1 L15.5 1 L15.5 11.5 L12 11.5 L9.8 14.8 L9.8 11.5 L0.5 11.5Z" fill="#1d99f3"/>
<rect x="3.5" y="3" width="9" height="5.8" fill="#c9e7fc"/></svg>
<svg class="abs" style="left:316.8px;top:345px" width="15.2" height="13.1" viewBox="0 0 16 16" preserveAspectRatio="none"><rect x="0" y="0" width="16" height="14" fill="#6d7276"/>
<path d="M2 2 L14 2 L14 9 L11.5 11.5 L4.5 11.5 L2 9Z" fill="#1b1e20"/>
<g fill="#d59a3a"><rect x="3.3" y="2.3" width="0.9" height="1.6"/><rect x="5.3" y="2.3" width="0.9" height="1.6"/><rect x="7.3" y="2.3" width="0.9" height="1.6"/><rect x="9.3" y="2.3" width="0.9" height="1.6"/><rect x="11.3" y="2.3" width="0.9" height="1.6"/></g></svg>
<svg class="abs" style="left:459px;top:345px" width="12.1" height="13" viewBox="0 0 16 16" preserveAspectRatio="none"><rect x="0.5" y="0.5" width="15" height="15" rx="1.5" fill="#c9cccf"/>
<circle cx="8" cy="7" r="5" fill="#2e3b44"/>
<path d="M8 7 L8 2 A5 5 0 0 1 12.3 4.5Z" fill="#7dc95e"/><path d="M8 7 L12.3 4.5 A5 5 0 0 1 11.5 10.5Z" fill="#2aa6a0"/><path d="M8 7 L3.7 4.5 A5 5 0 0 1 8 2Z" fill="#a7dd8a"/>
<rect x="2" y="13" width="12" height="1.5" fill="#444"/><rect x="3" y="13.3" width="3" height="0.9" fill="#d8a040"/></svg>
<svg class="abs" style="left:317.7px;top:367px" width="14" height="14.5" viewBox="0 0 16 16" preserveAspectRatio="none"><path d="M2 11.5 Q2 4 8 4 Q14 4 14 11.5Z" fill="#d9dcdf"/>
<path d="M3 10 Q3.5 5.5 8 5" stroke="#f5f5f5" stroke-width="0.8" fill="none"/>
<rect x="7.2" y="2.5" width="1.6" height="1.6" fill="#bbb"/>
<rect x="0" y="11.3" width="16" height="3.2" fill="#6b4a32"/><rect x="0" y="11.3" width="16" height="0.8" fill="#8a6a50"/></svg>
<svg class="abs" style="left:458.7px;top:370.2px" width="13.3" height="12.7" viewBox="0 0 16 16" preserveAspectRatio="none"><rect x="0.5" y="0.5" width="15" height="15" rx="1" fill="#232629"/>
<rect x="2" y="5" width="12" height="1" fill="#3daee9"/><rect x="11" y="4.2" width="3" height="2.6" fill="#e9ecee"/>
<rect x="2" y="9.5" width="12" height="1" fill="#4d5257"/><rect x="2.8" y="8.8" width="2.6" height="2.4" fill="#3daee9"/><rect x="5" y="9.5" width="0" height="1"/></svg>
<svg class="abs" style="left:318px;top:404.7px" width="12.4" height="13.1" viewBox="0 0 14 14.5" preserveAspectRatio="none"><rect x="0.5" y="0.5" width="13" height="13.5" fill="#141617"/>
<rect x="1" y="1.3" width="12" height="2.8" fill="#2a2d30"/><rect x="1" y="5.7" width="12" height="2.8" fill="#2a2d30"/><rect x="1" y="10.1" width="12" height="2.8" fill="#2a2d30"/>
<rect x="1.3" y="1.8" width="1" height="1" fill="#5dbb45"/><rect x="1.3" y="6.3" width="1" height="1" fill="#5dbb45"/><rect x="1.3" y="11" width="1" height="1" fill="#5dbb45"/></svg>
<svg class="abs" style="left:459px;top:404.7px" width="12" height="12.9" viewBox="0.5 0.5 13.5 13" preserveAspectRatio="none"><rect x="1.5" y="0.5" width="11" height="13" fill="#c9a074"/>
<rect x="1.5" y="0.5" width="1.6" height="13" fill="#4a3628"/>
<g fill="#aab"><rect x="0.5" y="2.5" width="1.5" height="1"/><rect x="0.5" y="6" width="1.5" height="1"/><rect x="0.5" y="9.5" width="1.5" height="1"/></g>
<rect x="12.5" y="2" width="1.5" height="2" fill="#4c4"/><rect x="12.5" y="5" width="1.5" height="2" fill="#49d"/><rect x="12.5" y="8" width="1.5" height="2" fill="#d55"/>
<circle cx="7.5" cy="4.8" r="1.7" fill="none" stroke="#333" stroke-width="0.7"/>
<path d="M4.5 10.5 L5.5 7.5 L9.5 7.5 L10.5 10.5Z" fill="none" stroke="#333" stroke-width="0.7"/></svg>
<div class="t" style="left:214.00px;top:429.78px;font-size:6.4px;color:#31363b;font-weight:normal;transform:scaleX(0.97);">Pronto</div>
<div class="abs" style="left:0px;top:489px;width:900px;height:17px;background:#3e4246;"></div>
<div class="abs" style="left:33px;top:489.5px;width:119px;height:16.5px;background:#4a4e52;"></div>
<svg class="abs" style="left:0px;top:488px" width="17" height="18" viewBox="0 0 17 18"><circle cx="8.4" cy="9.4" r="7.2" fill="none" stroke="#ececec" stroke-width="1.3"/><circle cx="8.4" cy="9.4" r="6.3" fill="#eeeeee"/><path d="M4 6.2 Q8 3.6 12.6 6 Q12.8 7 12.4 7.4 Q8.5 5.5 5 6.8Z" fill="#3e4246"/><path d="M4 12.6 Q8.4 11.2 13 12.4 Q12.8 13.4 12 13.8 Q8.2 12.6 4.6 13.6Z" fill="#3e4246"/><circle cx="9.9" cy="9.4" r="1.6" fill="none" stroke="#55595d" stroke-width="0.8"/><path d="M6 10.6 Q8 9.8 9.5 10.8" stroke="#55595d" stroke-width="0.7" fill="none"/></svg>
<div class="abs" style="left:18px;top:490px;width:12px;height:7px;background:#4b8fbd;"></div>
<div class="abs" style="left:20.5px;top:491px;width:6.5px;height:4.5px;background:#6aaad6;"></div>
<div class="abs" style="left:18px;top:497px;width:12px;height:8px;background:#4c5054;"></div>
<div class="abs" style="left:18px;top:497px;width:12px;height:8px;background:#4a4e53;"></div>
<div class="abs" style="left:155px;top:489.5px;width:120px;height:16px;background:#4a7592;"></div>
<svg class="abs" style="left:35.5px;top:492.5px" width="10" height="10" viewBox="0 0 10 10"><circle cx="5" cy="5" r="3.3" fill="none" stroke="#ea2b4a" stroke-width="2.6" stroke-dasharray="8 30" transform="rotate(-100 5 5)"/><circle cx="5" cy="5" r="3.3" fill="none" stroke="#22a54a" stroke-width="2.6" stroke-dasharray="6 30" transform="rotate(150 5 5)"/><circle cx="5" cy="5" r="3.3" fill="none" stroke="#f6c12c" stroke-width="2.6" stroke-dasharray="6 30" transform="rotate(40 5 5)"/><circle cx="5.6" cy="5.2" r="1.5" fill="#2a6ee8"/></svg>
<div class="t" style="left:48.50px;top:493.94px;font-size:7.4px;color:#dcdee0;font-weight:normal;transform:scaleX(0.88);-webkit-text-stroke:0">Content Manager: Edit Article - Xtr...</div>
<svg class="abs" style="left:157px;top:493px" width="10" height="10" viewBox="0 0 10 10"><circle cx="5" cy="5" r="4.6" fill="#6cbb7b"/><path d="M2.5 5.5 Q3.5 3.5 5.5 4 L7.5 5 L6.5 6.5 L3.5 6.5 Z" fill="#e9f6eb"/></svg>
<div class="t" style="left:170.00px;top:493.94px;font-size:7.4px;color:#e6e8ea;font-weight:normal;transform:scaleX(0.88);-webkit-text-stroke:0">Centro di controllo di YaST @ local...</div>
<svg class="abs" style="left:794px;top:492px" width="10" height="10" viewBox="0 0 10 10"><circle cx="5" cy="5" r="4" fill="none" stroke="#dcdcdc" stroke-width="1"/><path d="M5 2.5 L5 7 M3.5 4 L5 2.5 L6.5 4" stroke="#dcdcdc" stroke-width="1" fill="none"/><circle cx="7.5" cy="8" r="1.6" fill="#e8343a"/></svg>
<svg class="abs" style="left:806px;top:492px" width="10" height="10" viewBox="0 0 10 10"><rect x="1.5" y="1.5" width="7" height="8" rx="1" fill="none" stroke="#bfc1c3" stroke-width="1"/><line x1="3" y1="5" x2="7" y2="5" stroke="#bfc1c3"/></svg>
<svg class="abs" style="left:818px;top:492px" width="11" height="11" viewBox="0 0 11 11"><path d="M1 4 Q5.5 0 10 4 M2.5 5.5 Q5.5 3 8.5 5.5 M4 7 Q5.5 6 7 7" stroke="#c6c8ca" fill="none" stroke-width="0.9"/><circle cx="5.5" cy="8.8" r="0.9" fill="#c6c8ca"/></svg>
<svg class="abs" style="left:830px;top:492px" width="10" height="11" viewBox="0 0 10 11"><path d="M1 4 L3 4 L6 1.5 L6 9.5 L3 7 L1 7Z" fill="#d8dadc"/><path d="M7.5 3.5 Q9 5.5 7.5 7.5" stroke="#d8dadc" fill="none" stroke-width="0.8"/></svg>
<svg class="abs" style="left:844px;top:494px" width="8" height="6" viewBox="0 0 8 6"><path d="M1 5 L4 1.5 L7 5Z" fill="#eeeeee"/></svg>
<div class="t" style="left:854.50px;top:492.72px;font-size:11.2px;color:#e6e8ea;font-weight:normal;transform:scaleX(0.96);-webkit-text-stroke:0">18:29</div>
<div class="abs" style="left:886px;top:492px;width:12px;height:11px;background:transparent;border:1px solid #c0c2c4"></div>
<svg class="abs" style="left:765px;top:425px" width="135" height="60" viewBox="0 0 135 60">
<defs>
<linearGradient id="gch" x1="0" x2="1"><stop offset="0" stop-color="#a0a2a4"/><stop offset="1" stop-color="#141516"/></linearGradient>
<linearGradient id="bch" x1="0" x2="1" y1="0" y2="1"><stop offset="0" stop-color="#30a8e8"/><stop offset="1" stop-color="#3146b8"/></linearGradient>
<linearGradient id="hw" x1="0" x2="1"><stop offset="0" stop-color="#000"/><stop offset="0.45" stop-color="#1a1a1a"/><stop offset="1" stop-color="#e8e8e8"/></linearGradient>
<linearGradient id="tr" x1="0" x2="1"><stop offset="0" stop-color="#2c8fe4"/><stop offset="1" stop-color="#3a4fd6"/></linearGradient>
</defs>
<path d="M7.2 5.4 L19.6 5.4 L33.5 24.3 L25.7 38.1 L13 38.1 L22.5 24.3 Z" fill="url(#gch)"/>
<path d="M36.2 22 L51.7 22 L41.8 34.5 L58.4 54.2 L46.2 54.2 L31.2 34.8 Z" fill="url(#bch)"/>
<rect x="51.7" y="42.7" width="75" height="11.3" fill="url(#hw)"/>
<text x="56.5" y="53" font-family="Liberation Sans" font-weight="bold" font-size="11.5" fill="#fff" textLength="68.5" lengthAdjust="spacingAndGlyphs">HARDWARE</text>
<text x="50" y="39.8" font-family="Liberation Sans" font-weight="bold" font-size="20.5" fill="url(#tr)" textLength="76" lengthAdjust="spacingAndGlyphs">treme</text>
</svg>
<svg class="abs" style="left:0px;top:426px" width="8" height="14" viewBox="0 0 8 14"><path d="M-1 1.6 L5.7 7.5 L3.6 11.8 L-1 10Z" fill="#5a5a5a" stroke="#c8c8c8" stroke-width="0.7"/></svg>
</body></html>
